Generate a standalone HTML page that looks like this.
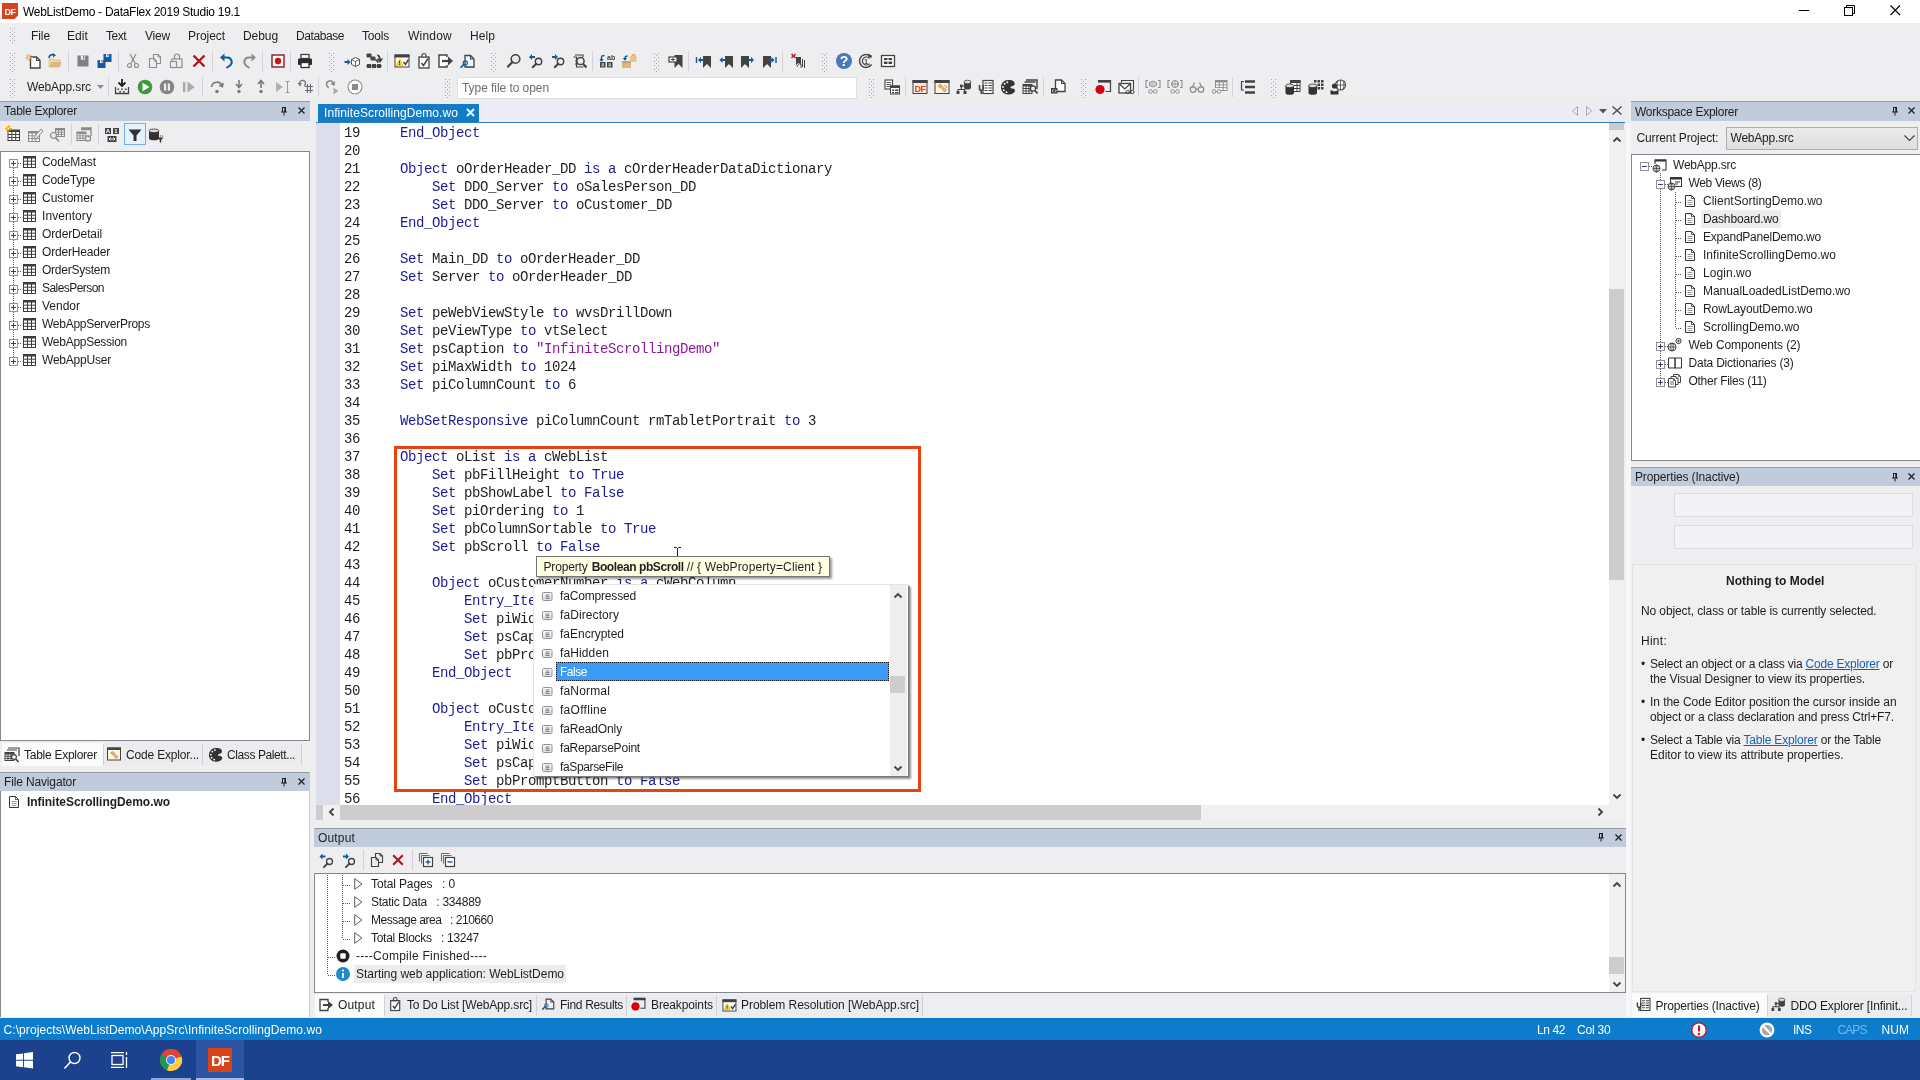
<!DOCTYPE html><html><head><meta charset="utf-8"><title>WebListDemo - DataFlex 2019 Studio 19.1</title><style>
html,body{margin:0;padding:0}
body{will-change:transform;width:1920px;height:1080px;position:relative;overflow:hidden;background:#eeeef1;font-family:'Liberation Sans',sans-serif;font-size:12px;color:#1e1e1e}
body div,body span.t,svg.i{position:absolute;box-sizing:border-box}
span.t{white-space:pre;display:block}
span.m{font-family:'Liberation Mono',monospace}
svg.i{overflow:visible}
a{color:#1a5fb4;text-decoration:underline}
.k{color:#1b1b92}.s{color:#8a1a9a}
</style></head><body><div style="left:0px;top:0px;width:1920px;height:23px;background:#ffffff;"></div><svg class="i" style="left:2px;top:3px;" width="16" height="16" viewBox="0 0 16 16"><path d="M0 0h16v12.5l-3.5 3.5h-12.5z" fill="#d9431a"/><text x="8" y="11.5" text-anchor="middle" font-family="Liberation Sans" font-weight="bold" font-size="9" fill="#fff" letter-spacing="-.6">DF</text></svg><span class="t" style="top:3.5px;line-height:16px;font-size:12px;color:#000;left:23px;letter-spacing:-0.280px;">WebListDemo - DataFlex 2019 Studio 19.1</span><svg class="i" style="left:1799px;top:10px;" width="10" height="1" viewBox="0 0 10 1"><rect width="10" height="1" fill="#000"/></svg><svg class="i" style="left:1844px;top:5px;" width="10.5" height="10.5" viewBox="0 0 10.5 10.5"><path d="M2.5 2.5v-2h8v8h-2" fill="none" stroke="#000"/><rect x=".5" y="2.5" width="8" height="8" fill="none" stroke="#000"/></svg><svg class="i" style="left:1890px;top:4.5px;" width="11" height="11" viewBox="0 0 11 11"><path d="M.5 .5l9.500 9.500M10 .5l-9.500 9.500" stroke="#000" stroke-width="1.1"/></svg><svg class="i" style="left:10px;top:28px;" width="5" height="16" viewBox="0 0 5 16"><g fill="#a5a5ab"><rect x="0" y="0" width="1" height="1"/><rect x="2" y="2" width="1" height="1"/><rect x="4" y="0" width="1" height="1"/><rect x="0" y="4" width="1" height="1"/><rect x="2" y="6" width="1" height="1"/><rect x="4" y="4" width="1" height="1"/><rect x="0" y="8" width="1" height="1"/><rect x="2" y="10" width="1" height="1"/><rect x="4" y="8" width="1" height="1"/><rect x="0" y="12" width="1" height="1"/><rect x="2" y="14" width="1" height="1"/><rect x="4" y="12" width="1" height="1"/></g></svg><span class="t" style="top:27.5px;line-height:16px;font-size:12px;color:#1e1e1e;left:31px;letter-spacing:-0.086px;">File</span><span class="t" style="top:27.5px;line-height:16px;font-size:12px;color:#1e1e1e;left:67px;letter-spacing:0.078px;">Edit</span><span class="t" style="top:27.5px;line-height:16px;font-size:12px;color:#1e1e1e;left:106px;letter-spacing:-0.504px;">Text</span><span class="t" style="top:27.5px;line-height:16px;font-size:12px;color:#1e1e1e;left:145px;letter-spacing:-0.199px;">View</span><span class="t" style="top:27.5px;line-height:16px;font-size:12px;color:#1e1e1e;left:188px;letter-spacing:-0.051px;">Project</span><span class="t" style="top:27.5px;line-height:16px;font-size:12px;color:#1e1e1e;left:243px;letter-spacing:-0.075px;">Debug</span><span class="t" style="top:27.5px;line-height:16px;font-size:12px;color:#1e1e1e;left:296px;letter-spacing:-0.422px;">Database</span><span class="t" style="top:27.5px;line-height:16px;font-size:12px;color:#1e1e1e;left:362px;letter-spacing:-0.203px;">Tools</span><span class="t" style="top:27.5px;line-height:16px;font-size:12px;color:#1e1e1e;left:408px;letter-spacing:0.219px;">Window</span><span class="t" style="top:27.5px;line-height:16px;font-size:12px;color:#1e1e1e;left:470px;letter-spacing:0.078px;">Help</span><svg class="i" style="left:10px;top:53px;" width="5" height="18" viewBox="0 0 5 18"><g fill="#a5a5ab"><rect x="0" y="0" width="1" height="1"/><rect x="2" y="2" width="1" height="1"/><rect x="4" y="0" width="1" height="1"/><rect x="0" y="4" width="1" height="1"/><rect x="2" y="6" width="1" height="1"/><rect x="4" y="4" width="1" height="1"/><rect x="0" y="8" width="1" height="1"/><rect x="2" y="10" width="1" height="1"/><rect x="4" y="8" width="1" height="1"/><rect x="0" y="12" width="1" height="1"/><rect x="2" y="14" width="1" height="1"/><rect x="4" y="12" width="1" height="1"/><rect x="0" y="16" width="1" height="1"/><rect x="2" y="18" width="1" height="1"/><rect x="4" y="16" width="1" height="1"/></g></svg><svg class="i" style="left:25px;top:53px;" width="16" height="16" viewBox="0 0 16 16"><path d="M5.5 4h6.0l3.5 3.5v7.5h-9.5z" fill="#fff" stroke="#424242" stroke-width="1.4"/><path d="M11.5 4v3.5h3.5" fill="none" stroke="#424242" stroke-width="1.1199999999999999"/><g transform="translate(.5,1)"><path d="M3.5 0v7M0 3.5h7M1 1l5 5M6 1l-5 5" stroke="#e59a12" stroke-width=".9"/><circle cx="3.5" cy="3.5" r=".9" fill="#fff7d0"/></g></svg><svg class="i" style="left:47px;top:53px;" width="16" height="16" viewBox="0 0 16 16"><path d="M2 6h4l1 1h6v7h-11z" fill="#f0d9a8" stroke="#dcb67a" stroke-width=".8"/><path d="M2.5 14l2-5h10l-2 5z" fill="#dcb67a"/><path d="M2 5c0-3 3-4 5-3" fill="none" stroke="#0f5aa0" stroke-width="1.6"/><path d="M6 0l3 2.2l-3 2.2z" fill="#0f5aa0"/></svg><div style="left:68px;top:51px;width:1px;height:20px;background:#d2d2d8;"></div><svg class="i" style="left:75px;top:53px;" width="16" height="16" viewBox="0 0 16 16"><path d="M2.5 2.5h11v11h-11z" fill="#7f7f83"/><rect x="5.8" y="2.5" width="4.4" height="4.18" fill="#eeeef2"/><rect x="8.0" y="2.5" width="1.3199999999999998" height="3.3" fill="#7f7f83"/></svg><svg class="i" style="left:97px;top:53px;" width="16" height="16" viewBox="0 0 16 16"><path d="M0.5 7h8v8h-8z" fill="#0f5aa0"/><rect x="2.9" y="7" width="3.2" height="3.04" fill="#eeeef2"/><rect x="4.5" y="7" width="0.96" height="2.4" fill="#0f5aa0"/><path d="M6.5 1h8v8h-8z" fill="#0f5aa0"/><rect x="8.9" y="1" width="3.2" height="3.04" fill="#eeeef2"/><rect x="10.5" y="1" width="0.96" height="2.4" fill="#0f5aa0"/></svg><div style="left:118px;top:51px;width:1px;height:20px;background:#d2d2d8;"></div><svg class="i" style="left:125px;top:53px;" width="16" height="16" viewBox="0 0 16 16"><path d="M5 1l5.5 10M11 1l-5.5 10" stroke="#8e8e8e" stroke-width="1.3"/><circle cx="4.5" cy="12.5" r="2" fill="none" stroke="#8e8e8e" stroke-width="1.2"/><circle cx="11.5" cy="12.5" r="2" fill="none" stroke="#8e8e8e" stroke-width="1.2"/></svg><svg class="i" style="left:147px;top:53px;" width="16" height="16" viewBox="0 0 16 16"><path d="M6.5 1.5h4.5l2.5 2.5v6.5h-7z" fill="none" stroke="#8e8e8e" stroke-width="1.1"/><path d="M11.0 1.5v2.5h2.5" fill="none" stroke="#8e8e8e" stroke-width="0.8800000000000001"/><path d="M2.5 5.5h4.5l2.5 2.5v6.5h-7z" fill="#eeeef2" stroke="#8e8e8e" stroke-width="1.1"/><path d="M7.0 5.5v2.5h2.5" fill="none" stroke="#8e8e8e" stroke-width="0.8800000000000001"/></svg><svg class="i" style="left:169px;top:53px;" width="16" height="16" viewBox="0 0 16 16"><rect x="3" y="6" width="10" height="8.5" fill="none" stroke="#8e8e8e" stroke-width="1.2"/><path d="M5.5 6v-2.5a2.5 2.5 0 0 1 5 0v2.5" fill="none" stroke="#8e8e8e" stroke-width="1.2"/><rect x="1.5" y="8.5" width="6" height="6" fill="#eeeef2" stroke="#8e8e8e" stroke-width="1.1"/></svg><svg class="i" style="left:191px;top:53px;" width="16" height="16" viewBox="0 0 16 16"><path d="M2.5 2.5l11 11M13.5 2.5l-11 11" stroke="#b3141c" stroke-width="2.4"/></svg><div style="left:212px;top:51px;width:1px;height:20px;background:#d2d2d8;"></div><svg class="i" style="left:219px;top:53px;" width="16" height="16" viewBox="0 0 16 16"><path d="M3.5 4.5h5a4.5 4.5 0 0 1 2.5 8l-3.5 2.5" fill="none" stroke="#0f5aa0" stroke-width="2"/><path d="M1 4.5l4.5-4v8z" fill="#0f5aa0"/></svg><svg class="i" style="left:241px;top:53px;" width="16" height="16" viewBox="0 0 16 16"><g transform="translate(16,0) scale(-1,1)"><path d="M3.5 4.5h5a4.5 4.5 0 0 1 2.5 8l-3.5 2.5" fill="none" stroke="#8e8e8e" stroke-width="2"/><path d="M1 4.5l4.5-4v8z" fill="#8e8e8e"/></g></svg><div style="left:262px;top:51px;width:1px;height:20px;background:#d2d2d8;"></div><svg class="i" style="left:270px;top:53px;" width="16" height="16" viewBox="0 0 16 16"><rect x="2" y="2" width="12" height="12" fill="#fff" stroke="#8c1a1a" stroke-width="1.4"/><circle cx="8" cy="8" r="3.2" fill="#c4161c"/></svg><div style="left:290px;top:51px;width:1px;height:20px;background:#d2d2d8;"></div><svg class="i" style="left:297px;top:53px;" width="16" height="16" viewBox="0 0 16 16"><rect x="4" y="1.5" width="8" height="4" fill="#fff" stroke="#424242" stroke-width="1.3"/><rect x="1" y="5.5" width="14" height="6.5" rx="1" fill="#2d2d2d"/><rect x="4" y="9.5" width="8" height="5" fill="#fff" stroke="#2d2d2d" stroke-width="1.3"/></svg><svg class="i" style="left:329px;top:53px;" width="5" height="18" viewBox="0 0 5 18"><g fill="#a5a5ab"><rect x="0" y="0" width="1" height="1"/><rect x="2" y="2" width="1" height="1"/><rect x="4" y="0" width="1" height="1"/><rect x="0" y="4" width="1" height="1"/><rect x="2" y="6" width="1" height="1"/><rect x="4" y="4" width="1" height="1"/><rect x="0" y="8" width="1" height="1"/><rect x="2" y="10" width="1" height="1"/><rect x="4" y="8" width="1" height="1"/><rect x="0" y="12" width="1" height="1"/><rect x="2" y="14" width="1" height="1"/><rect x="4" y="12" width="1" height="1"/><rect x="0" y="16" width="1" height="1"/><rect x="2" y="18" width="1" height="1"/><rect x="4" y="16" width="1" height="1"/></g></svg><svg class="i" style="left:344px;top:53px;" width="16" height="16" viewBox="0 0 16 16"><path d="M6.5 9l-3 -3v2h-3v2h3v2z" fill="#0f5aa0"/><path d="M11.500 4.500l4 2v4.800l-4 2.300l-4-2.300v-4.800z" fill="#fff" stroke="#424242" stroke-width=".9"/><path d="M7.500 6.500l4 2l4-2M11.500 8.500v5" fill="none" stroke="#424242" stroke-width=".8"/></svg><svg class="i" style="left:366px;top:53px;" width="16" height="16" viewBox="0 0 16 16"><path d="M1 1h4v3h-4zM5 4h4v3h-4zM9 7h3v3" fill="#424242" stroke="#424242" stroke-width="1"/><path d="M11 2c3 0 3 2 3 5M12 6l2 3l2-3z" fill="#424242" stroke="#424242" stroke-width="1.2"/><path d="M1 11h4v4h-4zM6 11h4v4h-4zM11 11h4v4h-4z" fill="#424242"/><path d="M0 13h16" stroke="#424242"/></svg><div style="left:387px;top:51px;width:1px;height:20px;background:#d2d2d8;"></div><svg class="i" style="left:394px;top:53px;" width="16" height="16" viewBox="0 0 16 16"><rect x="1.0" y="2.0" width="14" height="12" fill="#fff" stroke="#424242"/><rect x="0.5" y="1.5" width="15" height="3" fill="#424242"/><path d="M5.5 6l3.5 6.5h-7z" fill="#ffd91a" stroke="#c9a800" stroke-width=".5"/><path d="M5.5 8v2.5M5.5 11.2v.8" stroke="#333" stroke-width="1"/><path d="M9.5 9l2 2.5l3-5" fill="none" stroke="#424242" stroke-width="1.5"/></svg><svg class="i" style="left:416px;top:53px;" width="16" height="16" viewBox="0 0 16 16"><rect x="3" y="4" width="10" height="11" fill="#fff" stroke="#424242" stroke-width="1.3"/><path d="M6 4v-1.5a2 2 0 0 1 4 0v1.5z" fill="#fff" stroke="#424242" stroke-width="1.2"/><path d="M5.5 10l2 2.5l4.5-7" fill="none" stroke="#424242" stroke-width="1.5"/></svg><svg class="i" style="left:438px;top:53px;" width="16" height="16" viewBox="0 0 16 16"><path d="M9 4v-2h-8v12h8v-2" fill="#fff" stroke="#424242" stroke-width="1.4"/><path d="M4 8h8" stroke="#424242" stroke-width="2.2"/><path d="M10 3.5l5 4.5l-5 4.5z" fill="#424242"/></svg><svg class="i" style="left:459px;top:53px;" width="16" height="16" viewBox="0 0 16 16"><path d="M6 2.5h5.5l3.5 3.5v8.0h-9z" fill="#eef3fa" stroke="#424242" stroke-width="1.3"/><path d="M11.5 2.5v3.5h3.5" fill="none" stroke="#424242" stroke-width="1.04"/><circle cx="6.3" cy="10" r="2.1" fill="none" stroke="#0f5aa0" stroke-width="1.1"/><path d="M4.83 11.47l-2.8 2.8" stroke="#0f5aa0" stroke-width="1.7000000000000002" stroke-linecap="round"/></svg><svg class="i" style="left:491px;top:53px;" width="5" height="18" viewBox="0 0 5 18"><g fill="#a5a5ab"><rect x="0" y="0" width="1" height="1"/><rect x="2" y="2" width="1" height="1"/><rect x="4" y="0" width="1" height="1"/><rect x="0" y="4" width="1" height="1"/><rect x="2" y="6" width="1" height="1"/><rect x="4" y="4" width="1" height="1"/><rect x="0" y="8" width="1" height="1"/><rect x="2" y="10" width="1" height="1"/><rect x="4" y="8" width="1" height="1"/><rect x="0" y="12" width="1" height="1"/><rect x="2" y="14" width="1" height="1"/><rect x="4" y="12" width="1" height="1"/><rect x="0" y="16" width="1" height="1"/><rect x="2" y="18" width="1" height="1"/><rect x="4" y="16" width="1" height="1"/></g></svg><svg class="i" style="left:506px;top:53px;" width="16" height="16" viewBox="0 0 16 16"><circle cx="9.5" cy="6" r="4.3" fill="none" stroke="#424242" stroke-width="1.6"/><path d="M6.49 9.01l-4.5 4.5" stroke="#424242" stroke-width="2.2" stroke-linecap="round"/></svg><svg class="i" style="left:528px;top:53px;" width="16" height="16" viewBox="0 0 16 16"><circle cx="10.5" cy="8.5" r="3.2" fill="none" stroke="#424242" stroke-width="1.4"/><path d="M8.26 10.74l-3.5 3.5" stroke="#424242" stroke-width="2.0" stroke-linecap="round"/><path d="M1 4l3 -3v2h3v2h-3v2z" fill="#0f5aa0"/></svg><svg class="i" style="left:550px;top:53px;" width="16" height="16" viewBox="0 0 16 16"><circle cx="10.5" cy="8.5" r="3.2" fill="none" stroke="#424242" stroke-width="1.4"/><path d="M8.26 10.74l-3.5 3.5" stroke="#424242" stroke-width="2.0" stroke-linecap="round"/><path d="M8 4l-3 -3v2h-3v2h3v2z" fill="#0f5aa0"/></svg><svg class="i" style="left:572px;top:53px;" width="16" height="16" viewBox="0 0 16 16"><path d="M3 2h8v2M1.5 4h3v10h7" fill="none" stroke="#424242" stroke-width="1.2"/><circle cx="8.5" cy="8" r="3.6" fill="#eeeef2" stroke="#424242" stroke-width="1.5"/><path d="M11 10.8l3.5 3.7" stroke="#424242" stroke-width="2.2"/><path d="M3 8h2M3 11h3" stroke="#424242"/></svg><div style="left:592px;top:51px;width:1px;height:20px;background:#d2d2d8;"></div><svg class="i" style="left:599px;top:53px;" width="16" height="16" viewBox="0 0 16 16"><rect x="1" y="9" width="5.5" height="5.5" fill="#424242"/><rect x="8" y="9" width="5.5" height="5.5" fill="#424242"/><path d="M2.5 11h2.5M9.5 11h2.5M2.5 12.8h2.5M9.5 12.8h2.5" stroke="#fff" stroke-width=".9"/><path d="M2.5 8v-3.5c0-1.5 1-2 3-2" fill="none" stroke="#0f5aa0" stroke-width="1.4"/><path d="M0.3 6l2.2 2.8l2.2-2.8z" fill="#0f5aa0"/><text x="8" y="6.5" font-family="Liberation Sans" font-weight="bold" font-size="7" fill="#424242">ab</text></svg><svg class="i" style="left:621px;top:53px;" width="16" height="16" viewBox="0 0 16 16"><rect x="1" y="8" width="9" height="7" fill="#dcb67a"/><rect x="1" y="8" width="9" height="2" fill="#c9a267"/><rect x="9" y="3" width="6.5" height="6" fill="#e6c48d"/><rect x="10.5" y="1" width="4" height="2" fill="#dcb67a"/><path d="M4 7v-2c0-1.5 1-2 2.5-2" fill="none" stroke="#0f5aa0" stroke-width="1.4"/><path d="M1.8 5l2.2 2.8l2.2-2.8z" fill="#0f5aa0"/></svg><svg class="i" style="left:654px;top:53px;" width="5" height="18" viewBox="0 0 5 18"><g fill="#a5a5ab"><rect x="0" y="0" width="1" height="1"/><rect x="2" y="2" width="1" height="1"/><rect x="4" y="0" width="1" height="1"/><rect x="0" y="4" width="1" height="1"/><rect x="2" y="6" width="1" height="1"/><rect x="4" y="4" width="1" height="1"/><rect x="0" y="8" width="1" height="1"/><rect x="2" y="10" width="1" height="1"/><rect x="4" y="8" width="1" height="1"/><rect x="0" y="12" width="1" height="1"/><rect x="2" y="14" width="1" height="1"/><rect x="4" y="12" width="1" height="1"/><rect x="0" y="16" width="1" height="1"/><rect x="2" y="18" width="1" height="1"/><rect x="4" y="16" width="1" height="1"/></g></svg><svg class="i" style="left:668px;top:53px;" width="16" height="16" viewBox="0 0 16 16"><path d="M6.5 2h8v13l-4.0 -4.0l-4.0 4.0z" fill="#424242"/><rect x="1" y="4" width="8" height="5" fill="#fff" stroke="#424242" stroke-width="1.2"/><path d="M3 6.5h4M5 5v3" stroke="#424242" stroke-width="1"/></svg><div style="left:688px;top:51px;width:1px;height:20px;background:#d2d2d8;"></div><svg class="i" style="left:695px;top:53px;" width="16" height="16" viewBox="0 0 16 16"><path d="M8 3h8v12l-4.0 -4.0l-4.0 4.0z" fill="#424242"/><path d="M3 7l3 -3v2h3v2h-3v2z" fill="#0f5aa0"/><path d="M1.500 4v6" stroke="#0f5aa0" stroke-width="1.4"/></svg><svg class="i" style="left:717px;top:53px;" width="16" height="16" viewBox="0 0 16 16"><path d="M8 3h8v12l-4.0 -4.0l-4.0 4.0z" fill="#424242"/><path d="M2.5 7l3 -3v2h3v2h-3v2z" fill="#0f5aa0"/></svg><svg class="i" style="left:739px;top:53px;" width="16" height="16" viewBox="0 0 16 16"><path d="M2 3h8v12l-4.0 -4.0l-4.0 4.0z" fill="#424242"/><path d="M15 7l-3 -3v2h-3v2h3v2z" fill="#0f5aa0"/></svg><svg class="i" style="left:761px;top:53px;" width="16" height="16" viewBox="0 0 16 16"><path d="M2 3h8v12l-4.0 -4.0l-4.0 4.0z" fill="#424242"/><path d="M13.5 7l-3 -3v2h-3v2h3v2z" fill="#0f5aa0"/><path d="M15 4v6" stroke="#0f5aa0" stroke-width="1.4"/></svg><div style="left:782px;top:51px;width:1px;height:20px;background:#d2d2d8;"></div><svg class="i" style="left:790px;top:53px;" width="16" height="16" viewBox="0 0 16 16"><path d="M1.5 1l4 4M5.5 1l-4 4" stroke="#b3141c" stroke-width="1.4"/><path d="M6 4h5v8l-2.5-2l-2.5 2z" fill="#424242"/><path d="M12.5 6v8M14.5 7v8" stroke="#424242" stroke-width="1"/><path d="M9 11l-2.5 3M11 11v4" stroke="#424242" stroke-width=".9"/></svg><svg class="i" style="left:822px;top:53px;" width="5" height="18" viewBox="0 0 5 18"><g fill="#a5a5ab"><rect x="0" y="0" width="1" height="1"/><rect x="2" y="2" width="1" height="1"/><rect x="4" y="0" width="1" height="1"/><rect x="0" y="4" width="1" height="1"/><rect x="2" y="6" width="1" height="1"/><rect x="4" y="4" width="1" height="1"/><rect x="0" y="8" width="1" height="1"/><rect x="2" y="10" width="1" height="1"/><rect x="4" y="8" width="1" height="1"/><rect x="0" y="12" width="1" height="1"/><rect x="2" y="14" width="1" height="1"/><rect x="4" y="12" width="1" height="1"/><rect x="0" y="16" width="1" height="1"/><rect x="2" y="18" width="1" height="1"/><rect x="4" y="16" width="1" height="1"/></g></svg><svg class="i" style="left:836px;top:53px;" width="16" height="16" viewBox="0 0 16 16"><circle cx="8" cy="8" r="8" fill="#4a78b8"/><text x="8" y="13" text-anchor="middle" font-family="Liberation Sans" font-weight="bold" font-size="14" fill="#fff">?</text></svg><svg class="i" style="left:858px;top:53px;" width="16" height="16" viewBox="0 0 16 16"><path d="M13.5 4.5a6.5 6.5 0 1 0 0 7" fill="none" stroke="#424242" stroke-width="1.4"/><path d="M11.5 5.5a4 4 0 1 0 0 5" fill="none" stroke="#424242" stroke-width="1.2"/><path d="M10 0.5l4.5 2.5l-4 2z" fill="#424242"/><text x="8" y="10.5" text-anchor="middle" font-family="Liberation Sans" font-weight="bold" font-size="6.5" fill="#424242">1</text></svg><svg class="i" style="left:880px;top:53px;" width="16" height="16" viewBox="0 0 16 16"><rect x="1.5" y="2.5" width="13" height="11" fill="#fff" stroke="#424242" stroke-width="1.3"/><path d="M4 5h3.5v2h-3.5zM8.5 5h3.5v2h-3.5zM4 8.5h3.5v2.5h-3.5zM8.5 8.5h3.5v2.5h-3.5z" fill="#424242"/></svg><svg class="i" style="left:10px;top:79px;" width="5" height="18" viewBox="0 0 5 18"><g fill="#a5a5ab"><rect x="0" y="0" width="1" height="1"/><rect x="2" y="2" width="1" height="1"/><rect x="4" y="0" width="1" height="1"/><rect x="0" y="4" width="1" height="1"/><rect x="2" y="6" width="1" height="1"/><rect x="4" y="4" width="1" height="1"/><rect x="0" y="8" width="1" height="1"/><rect x="2" y="10" width="1" height="1"/><rect x="4" y="8" width="1" height="1"/><rect x="0" y="12" width="1" height="1"/><rect x="2" y="14" width="1" height="1"/><rect x="4" y="12" width="1" height="1"/><rect x="0" y="16" width="1" height="1"/><rect x="2" y="18" width="1" height="1"/><rect x="4" y="16" width="1" height="1"/></g></svg><span class="t" style="top:78.5px;line-height:16px;font-size:12px;color:#1e1e1e;left:27px;letter-spacing:-0.114px;">WebApp.src</span><svg class="i" style="left:97px;top:85px;" width="7" height="4" viewBox="0 0 7 4"><path d="M0 0h7l-3.5 4z" fill="#8a8a8a"/></svg><div style="left:108px;top:77px;width:1px;height:20px;background:#d2d2d8;"></div><svg class="i" style="left:114px;top:79px;" width="16" height="16" viewBox="0 0 16 16"><path d="M1.5 8v6.5h13v-6.5" fill="none" stroke="#424242" stroke-width="1.3"/><path d="M8 0v6M4.5 3.5l3.5 3.5l3.5-3.5" fill="none" stroke="#1e1e1e" stroke-width="1.8"/><path d="M3.5 9.5h1.6v1.6h-1.6zM7.2 9.5h1.6v1.6h-1.6zM10.9 9.5h1.6v1.6h-1.6zM5.3 12h1.6v1.6h-1.6zM9 12h1.6v1.6h-1.6z" fill="#424242"/></svg><svg class="i" style="left:137px;top:79px;" width="16" height="16" viewBox="0 0 16 16"><circle cx="8" cy="8" r="7.3" fill="#3a9a3a"/><path d="M5.5 3.8l7 4.2l-7 4.2z" fill="#fff"/></svg><svg class="i" style="left:159px;top:79px;" width="16" height="16" viewBox="0 0 16 16"><circle cx="8" cy="8" r="7.3" fill="#858585"/><path d="M5 4.5h2.2v7h-2.2zM8.8 4.5h2.2v7h-2.2z" fill="#eeeef2"/></svg><svg class="i" style="left:181px;top:79px;" width="16" height="16" viewBox="0 0 16 16"><rect x="2" y="3" width="2.4" height="10" fill="#a9a9a9"/><path d="M6.5 2.5l7 5.5l-7 5.5z" fill="#a9a9a9"/></svg><div style="left:202px;top:77px;width:1px;height:20px;background:#d2d2d8;"></div><svg class="i" style="left:209px;top:79px;" width="16" height="16" viewBox="0 0 16 16"><path d="M2.5 8a5.5 5.5 0 0 1 10.5-1.5" fill="none" stroke="#7a7a7a" stroke-width="1.6"/><path d="M14.8 3.5l-.8 5.2l-4.6-2z" fill="#7a7a7a"/><circle cx="8" cy="12.5" r="1.7" fill="#7a7a7a"/></svg><svg class="i" style="left:231px;top:79px;" width="16" height="16" viewBox="0 0 16 16"><path d="M8 1v6M5 5l3 3.5l3-3.5" fill="none" stroke="#7a7a7a" stroke-width="1.6"/><circle cx="8" cy="12.5" r="1.7" fill="#7a7a7a"/></svg><svg class="i" style="left:253px;top:79px;" width="16" height="16" viewBox="0 0 16 16"><path d="M8 9v-6.5M5 5l3-3.5l3 3.5" fill="none" stroke="#7a7a7a" stroke-width="1.6"/><circle cx="8" cy="12.5" r="1.7" fill="#7a7a7a"/></svg><svg class="i" style="left:275px;top:79px;" width="16" height="16" viewBox="0 0 16 16"><path d="M1 3l7 5l-7 5z" fill="#b0b0b0"/><path d="M10.5 2.5h4M10.5 13.5h4M12.5 2.5v11" stroke="#9a9a9a" stroke-width="1"/></svg><svg class="i" style="left:297px;top:79px;" width="16" height="16" viewBox="0 0 16 16"><path d="M8 7.5h8M8 11.5h8M10.5 5v9M13.5 5v9" stroke="#6a6a6a" stroke-width="1.1"/><path d="M3 6a3 3 0 1 1 4 1" fill="none" stroke="#7a7a7a" stroke-width="1.4"/><path d="M0.5 4l2.5 3.5l2-3.5z" fill="#7a7a7a"/></svg><div style="left:318px;top:77px;width:1px;height:20px;background:#d2d2d8;"></div><svg class="i" style="left:324px;top:79px;" width="16" height="16" viewBox="0 0 16 16"><path d="M4.5 9l-2-3a3.5 3.5 0 0 1 6-3l1 1.5" fill="none" stroke="#8a8a8a" stroke-width="1.5"/><path d="M11 2l-.3 5l-4.2-2z" fill="#8a8a8a"/><path d="M9.5 8.5l5 3.5l-5 3.5z" fill="#a9a9a9"/></svg><svg class="i" style="left:347px;top:79px;" width="16" height="16" viewBox="0 0 16 16"><circle cx="8" cy="8" r="7" fill="#fff" stroke="#8a8a8a" stroke-width="1.1"/><rect x="5" y="5" width="6" height="6" fill="#8a8a8a"/></svg><svg class="i" style="left:445px;top:79px;" width="5" height="18" viewBox="0 0 5 18"><g fill="#a5a5ab"><rect x="0" y="0" width="1" height="1"/><rect x="2" y="2" width="1" height="1"/><rect x="4" y="0" width="1" height="1"/><rect x="0" y="4" width="1" height="1"/><rect x="2" y="6" width="1" height="1"/><rect x="4" y="4" width="1" height="1"/><rect x="0" y="8" width="1" height="1"/><rect x="2" y="10" width="1" height="1"/><rect x="4" y="8" width="1" height="1"/><rect x="0" y="12" width="1" height="1"/><rect x="2" y="14" width="1" height="1"/><rect x="4" y="12" width="1" height="1"/><rect x="0" y="16" width="1" height="1"/><rect x="2" y="18" width="1" height="1"/><rect x="4" y="16" width="1" height="1"/></g></svg><svg class="i" style="left:869px;top:79px;" width="5" height="18" viewBox="0 0 5 18"><g fill="#a5a5ab"><rect x="0" y="0" width="1" height="1"/><rect x="2" y="2" width="1" height="1"/><rect x="4" y="0" width="1" height="1"/><rect x="0" y="4" width="1" height="1"/><rect x="2" y="6" width="1" height="1"/><rect x="4" y="4" width="1" height="1"/><rect x="0" y="8" width="1" height="1"/><rect x="2" y="10" width="1" height="1"/><rect x="4" y="8" width="1" height="1"/><rect x="0" y="12" width="1" height="1"/><rect x="2" y="14" width="1" height="1"/><rect x="4" y="12" width="1" height="1"/><rect x="0" y="16" width="1" height="1"/><rect x="2" y="18" width="1" height="1"/><rect x="4" y="16" width="1" height="1"/></g></svg><svg class="i" style="left:884px;top:79px;" width="16" height="16" viewBox="0 0 16 16"><rect x="1" y="1" width="7.5" height="9" fill="#fff" stroke="#424242" stroke-width="1.1"/><path d="M2.5 3.5h4.5M2.5 5.5h4.5M2.5 7.5h4.5" stroke="#424242" stroke-width=".9"/><rect x="6.5" y="7.0" width="9" height="8" fill="#fff" stroke="#424242"/><rect x="6" y="6.5" width="10" height="2.5" fill="#424242"/><path d="M8 10.5h2v1.5h-2zM11 10.5h3.5v1.5h-3.5zM8 13h2v1.2h-2zM11 13h3.5v1.2h-3.5z" fill="#424242"/></svg><div style="left:905px;top:77px;width:1px;height:20px;background:#d2d2d8;"></div><svg class="i" style="left:912px;top:79px;" width="16" height="16" viewBox="0 0 16 16"><rect x="1.0" y="1.5" width="14" height="13" fill="#fde8dc" stroke="#424242"/><rect x="0.5" y="1" width="15" height="3" fill="#424242"/><text x="8" y="12.5" text-anchor="middle" font-family="Liberation Sans" font-weight="bold" font-size="9" fill="#d9461a" letter-spacing="-.5">DF</text></svg><svg class="i" style="left:934px;top:79px;" width="16" height="16" viewBox="0 0 16 16"><rect x="1.0" y="1.5" width="14" height="13" fill="#fdf3e0" stroke="#424242"/><rect x="0.5" y="1" width="15" height="3" fill="#424242"/><path d="M4 7l2-2l3 2.5l-2 2zM8 10l2-1.5l2.5 2.5l-2 2z" fill="#dcb67a" stroke="#b98a3c" stroke-width=".6"/><path d="M10.5 6.5c1.5 0 2 1 2 2.5" fill="none" stroke="#b98a3c" stroke-width="1"/></svg><svg class="i" style="left:956px;top:79px;" width="16" height="16" viewBox="0 0 16 16"><path d="M8 2.7v6a3.5 1.8 0 0 0 7 0v-6z" fill="#424242"/><ellipse cx="11.5" cy="3.0" rx="3.5" ry="1.8" fill="#dcdcdc" stroke="#424242" stroke-width="0.8"/><path d="M5.300 7h3M5.300 7v3.500M2 13v-2.500h6.700v2.500" fill="none" stroke="#424242" stroke-width="1.100"/><rect x="4" y="5.600" width="2.600" height="2.600" fill="#424242"/><rect x=".5" y="12" width="3" height="3" fill="#424242"/><rect x="7.5" y="12" width="3" height="3" fill="#424242"/></svg><svg class="i" style="left:978px;top:79px;" width="16" height="16" viewBox="0 0 16 16"><rect x="5" y="1.5" width="10" height="13" fill="#fff" stroke="#424242" stroke-width="1.2"/><path d="M6.5 4h3M10.5 4h3.5M6.5 6.5h3M10.5 6.5h3.5M6.5 9h3M10.5 9h3.5M6.5 11.5h3M10.5 11.5h3.5" stroke="#424242" stroke-width="1.1"/><path d="M1.5 6v3.5a1.8 1.8 0 0 0 3.6 0v-3.5M3.3 11v4" fill="none" stroke="#424242" stroke-width="1.6"/></svg><svg class="i" style="left:1000px;top:79px;" width="16" height="16" viewBox="0 0 16 16"><path d="M8 1C12 .5 15.500 2.500 14.600 5.500C14 7.200 11 7 10.300 8.400C11 9.700 15 9 15 11.500C15 14 11.500 15.500 8 15.500C4 15.500 1 12.500 1 8.500C1 4.500 4 1 8 1Z" fill="#333"/><circle cx="4.600" cy="4.800" r=".95" fill="#fff"/><circle cx="7.300" cy="3.200" r=".95" fill="#fff"/><circle cx="3" cy="8" r=".95" fill="#fff"/><circle cx="3.800" cy="11.200" r=".95" fill="#fff"/><circle cx="6.500" cy="13.200" r=".95" fill="#fff"/></svg><svg class="i" style="left:1022px;top:79px;" width="16" height="16" viewBox="0 0 16 16"><path d="M4 1h11v9M2.5 3h11" fill="none" stroke="#424242" stroke-width="1.4"/><rect x="0.5" y="5" width="10" height="10" fill="#424242"/><rect x="1.50" y="7.50" width="2.00" height="1.50" fill="#fff"/><rect x="1.50" y="10.00" width="2.00" height="1.50" fill="#fff"/><rect x="1.50" y="12.50" width="2.00" height="1.50" fill="#fff"/><rect x="4.50" y="7.50" width="2.00" height="1.50" fill="#fff"/><rect x="4.50" y="10.00" width="2.00" height="1.50" fill="#fff"/><rect x="4.50" y="12.50" width="2.00" height="1.50" fill="#fff"/><rect x="7.50" y="7.50" width="2.00" height="1.50" fill="#fff"/><rect x="7.50" y="10.00" width="2.00" height="1.50" fill="#fff"/><rect x="7.50" y="12.50" width="2.00" height="1.50" fill="#fff"/><circle cx="11" cy="9.5" r="2.6" fill="#eeeef2" stroke="#424242" stroke-width="1.3"/><path d="M13 11.5l2.5 3" stroke="#424242" stroke-width="1.8"/></svg><div style="left:1043px;top:77px;width:1px;height:20px;background:#d2d2d8;"></div><svg class="i" style="left:1050px;top:79px;" width="16" height="16" viewBox="0 0 16 16"><path d="M5.5 1h6.0l3.5 3.5v8.0h-9.5z" fill="#fff" stroke="#424242" stroke-width="1.3"/><path d="M11.5 1v3.5h3.5" fill="none" stroke="#424242" stroke-width="1.04"/><rect x="1" y="9" width="6.5" height="5.5" fill="#424242"/><path d="M3.5 10.5l-1.3 1.3l1.3 1.3M5 10.5l1.3 1.3l-1.3 1.3" fill="none" stroke="#fff" stroke-width=".9"/></svg><svg class="i" style="left:1081px;top:79px;" width="5" height="18" viewBox="0 0 5 18"><g fill="#a5a5ab"><rect x="0" y="0" width="1" height="1"/><rect x="2" y="2" width="1" height="1"/><rect x="4" y="0" width="1" height="1"/><rect x="0" y="4" width="1" height="1"/><rect x="2" y="6" width="1" height="1"/><rect x="4" y="4" width="1" height="1"/><rect x="0" y="8" width="1" height="1"/><rect x="2" y="10" width="1" height="1"/><rect x="4" y="8" width="1" height="1"/><rect x="0" y="12" width="1" height="1"/><rect x="2" y="14" width="1" height="1"/><rect x="4" y="12" width="1" height="1"/><rect x="0" y="16" width="1" height="1"/><rect x="2" y="18" width="1" height="1"/><rect x="4" y="16" width="1" height="1"/></g></svg><svg class="i" style="left:1095px;top:79px;" width="16" height="16" viewBox="0 0 16 16"><path d="M3.5 3v-1.5h12v11h-5" fill="none" stroke="#424242" stroke-width="1.2"/><rect x="3" y="1" width="13" height="2.6" fill="#424242"/><circle cx="5" cy="10.5" r="4.6" fill="#d4000f"/></svg><svg class="i" style="left:1118px;top:79px;" width="16" height="16" viewBox="0 0 16 16"><path d="M3.5 3.5v-2h12v9.5" fill="none" stroke="#424242" stroke-width="1.1"/><rect x="1" y="4.5" width="11.5" height="9.5" fill="#fff" stroke="#424242" stroke-width="1.3"/><path d="M1.5 5l5.3 5l5.2-5" fill="none" stroke="#424242" stroke-width="1.2"/><circle cx="9.66" cy="13" r="1.71" fill="none" stroke="#424242" stroke-width="1"/><circle cx="14.34" cy="13" r="1.71" fill="none" stroke="#424242" stroke-width="1"/><path d="M11.37 13h1.26" stroke="#424242"/></svg><div style="left:1138px;top:77px;width:1px;height:20px;background:#d2d2d8;"></div><svg class="i" style="left:1145px;top:79px;" width="16" height="16" viewBox="0 0 16 16"><path d="M3 1.5h-2v7h2M13 1.5h2v7h-2" fill="none" stroke="#8e8e8e" stroke-width="1.1"/><path d="M8 2l3.5 1.5v3l-3.5 1.5l-3.5-1.5v-3z" fill="#c9c9c9" stroke="#8e8e8e" stroke-width=".9"/><circle cx="5.53" cy="12.5" r="1.805" fill="none" stroke="#8e8e8e" stroke-width="1"/><circle cx="10.469999999999999" cy="12.5" r="1.805" fill="none" stroke="#8e8e8e" stroke-width="1"/><path d="M7.335 12.5h1.3299999999999998" stroke="#8e8e8e"/></svg><svg class="i" style="left:1167px;top:79px;" width="16" height="16" viewBox="0 0 16 16"><path d="M3 1.5h-2v7h2M13 1.5h2v7h-2" fill="none" stroke="#8e8e8e" stroke-width="1.1"/><circle cx="8" cy="5" r="3.5" fill="none" stroke="#8e8e8e"/><path d="M4.5 5h7M8 1.5v7M6 2.5c-1 1.5-1 3.5 0 5M10 2.5c1 1.5 1 3.5 0 5" fill="none" stroke="#8e8e8e" stroke-width=".8"/><circle cx="5.53" cy="12.5" r="1.805" fill="none" stroke="#8e8e8e" stroke-width="1"/><circle cx="10.469999999999999" cy="12.5" r="1.805" fill="none" stroke="#8e8e8e" stroke-width="1"/><path d="M7.335 12.5h1.3299999999999998" stroke="#8e8e8e"/></svg><svg class="i" style="left:1189px;top:79px;" width="16" height="16" viewBox="0 0 16 16"><path d="M3 9l2.5-5.5M13 9l-2.5-5.5" stroke="#8e8e8e" stroke-width="1.2" fill="none"/><circle cx="4" cy="10.5" r="2.8" fill="none" stroke="#8e8e8e" stroke-width="1.3"/><circle cx="12" cy="10.5" r="2.8" fill="none" stroke="#8e8e8e" stroke-width="1.3"/><path d="M6.8 10h2.4" stroke="#8e8e8e" stroke-width="1.2"/></svg><svg class="i" style="left:1212px;top:79px;" width="16" height="16" viewBox="0 0 16 16"><rect x="3" y="1" width="12.5" height="11" fill="#8e8e8e"/><rect x="4.00" y="3.50" width="2.83" height="1.83" fill="#fff"/><rect x="4.00" y="6.33" width="2.83" height="1.83" fill="#fff"/><rect x="4.00" y="9.17" width="2.83" height="1.83" fill="#fff"/><rect x="7.83" y="3.50" width="2.83" height="1.83" fill="#fff"/><rect x="7.83" y="6.33" width="2.83" height="1.83" fill="#fff"/><rect x="7.83" y="9.17" width="2.83" height="1.83" fill="#fff"/><rect x="11.67" y="3.50" width="2.83" height="1.83" fill="#fff"/><rect x="11.67" y="6.33" width="2.83" height="1.83" fill="#fff"/><rect x="11.67" y="9.17" width="2.83" height="1.83" fill="#fff"/><rect x="0" y="9" width="9" height="7" fill="#eeeef2"/><circle cx="2.0300000000000002" cy="12.5" r="1.805" fill="none" stroke="#8e8e8e" stroke-width="1"/><circle cx="6.97" cy="12.5" r="1.805" fill="none" stroke="#8e8e8e" stroke-width="1"/><path d="M3.835 12.5h1.3299999999999998" stroke="#8e8e8e"/></svg><div style="left:1232px;top:77px;width:1px;height:20px;background:#d2d2d8;"></div><svg class="i" style="left:1240px;top:79px;" width="16" height="16" viewBox="0 0 16 16"><path d="M5 2.5h10M5 8h10M5 13.5h10" stroke="#424242" stroke-width="2.4"/><path d="M4 2.5h-2.5v8.5h2.5" fill="none" stroke="#424242" stroke-width="1.2"/></svg><svg class="i" style="left:1271px;top:79px;" width="5" height="18" viewBox="0 0 5 18"><g fill="#a5a5ab"><rect x="0" y="0" width="1" height="1"/><rect x="2" y="2" width="1" height="1"/><rect x="4" y="0" width="1" height="1"/><rect x="0" y="4" width="1" height="1"/><rect x="2" y="6" width="1" height="1"/><rect x="4" y="4" width="1" height="1"/><rect x="0" y="8" width="1" height="1"/><rect x="2" y="10" width="1" height="1"/><rect x="4" y="8" width="1" height="1"/><rect x="0" y="12" width="1" height="1"/><rect x="2" y="14" width="1" height="1"/><rect x="4" y="12" width="1" height="1"/><rect x="0" y="16" width="1" height="1"/><rect x="2" y="18" width="1" height="1"/><rect x="4" y="16" width="1" height="1"/></g></svg><svg class="i" style="left:1285px;top:79px;" width="16" height="16" viewBox="0 0 16 16"><rect x="5.5" y="1.5" width="9.5" height="11" fill="#fff" stroke="#424242"/><rect x="5" y="1" width="10.5" height="3" fill="#424242"/><path d="M9 6.5h6M9 9.5h6M12 4v9" stroke="#424242" stroke-width="1"/><path d="M0.5 6.5v7.5a4.25 1.8 0 0 0 8.5 0v-7.5z" fill="#333"/><ellipse cx="4.75" cy="6.8" rx="4.25" ry="1.8" fill="#ddd" stroke="#333" stroke-width="0.8"/></svg><svg class="i" style="left:1308px;top:79px;" width="16" height="16" viewBox="0 0 16 16"><path d="M6 1h2.5v2.5h-2.5zM9.5 1h2.5v2.5h-2.5zM13 1h2.5v2.5h-2.5zM9.5 4.5h2.5v2.5h-2.5zM13 4.5h2.5v2.5h-2.5zM9.5 8h2.5v2.5h-2.5zM13 8h2.5v2.5h-2.5z" fill="#424242"/><path d="M0.5 6.5v7.5a4.25 1.8 0 0 0 8.5 0v-7.5z" fill="#333"/><ellipse cx="4.75" cy="6.8" rx="4.25" ry="1.8" fill="#ddd" stroke="#333" stroke-width="0.8"/></svg><svg class="i" style="left:1330px;top:79px;" width="16" height="16" viewBox="0 0 16 16"><circle cx="10.5" cy="6" r="5" fill="#fff" stroke="#424242" stroke-width="1.1"/><path d="M5.5 6h10M10.5 1v10M8 2c-1.3 2.5-1.3 5.5 0 8M13 2c1.3 2.5 1.3 5.5 0 8" fill="none" stroke="#424242" stroke-width=".8"/><circle cx="4.5" cy="7" r="2.6" fill="#333"/><path d="M0.5 15.5v-4.5l4 1.5l4-1.5v4.5z" fill="#333"/></svg><div style="left:457px;top:77px;width:400px;height:22px;background:#ffffff;border:1px solid #e0e1e6;"></div><span class="t" style="top:79.5px;line-height:16px;font-size:12px;color:#6e6e6e;left:462px;letter-spacing:-0.062px;">Type file to open</span><div style="left:0px;top:101px;width:1px;height:20px;background:#9a9aa0;"></div><div style="left:0px;top:101px;width:310px;height:19.5px;background:#c0cbdc;border-top:1px solid #9c9ca4;"></div><span class="t" style="top:103.25px;line-height:16px;font-size:12px;color:#1e1e1e;left:4px;letter-spacing:-0.266px;">Table Explorer</span><svg class="i" style="left:281px;top:106.75px;" width="6" height="9" viewBox="0 0 6 9"><path d="M1 .5h4M1.500 .5v4.500M4.500 .5v4.500M3.800 .5v4.500M0 5h6M3 5v3.500" stroke="#1e1e1e" stroke-width="1" fill="none"/></svg><svg class="i" style="left:297.5px;top:107.25px;" width="7" height="7" viewBox="0 0 7 7"><path d="M.5 .5l6 6M6.5 .5l-6 6" stroke="#1e1e1e" stroke-width="1.2"/></svg><svg class="i" style="left:5px;top:127px;" width="16" height="16" viewBox="0 0 16 16"><rect x="2.5" y="2.5" width="12.5" height="11.5" fill="#424242"/><rect x="3.50" y="5.00" width="2.83" height="2.00" fill="#fff"/><rect x="3.50" y="8.00" width="2.83" height="2.00" fill="#fff"/><rect x="3.50" y="11.00" width="2.83" height="2.00" fill="#fff"/><rect x="7.33" y="5.00" width="2.83" height="2.00" fill="#fff"/><rect x="7.33" y="8.00" width="2.83" height="2.00" fill="#fff"/><rect x="7.33" y="11.00" width="2.83" height="2.00" fill="#fff"/><rect x="11.17" y="5.00" width="2.83" height="2.00" fill="#fff"/><rect x="11.17" y="8.00" width="2.83" height="2.00" fill="#fff"/><rect x="11.17" y="11.00" width="2.83" height="2.00" fill="#fff"/><g transform="translate(0,-2)"><path d="M3.5 0v7M0 3.5h7M1 1l5 5M6 1l-5 5" stroke="#e59a12" stroke-width=".9"/><circle cx="3.5" cy="3.5" r=".9" fill="#fff7d0"/></g></svg><svg class="i" style="left:27px;top:127px;" width="16" height="16" viewBox="0 0 16 16"><rect x="1" y="4" width="12" height="11" fill="#8a8a8a"/><rect x="2.00" y="6.50" width="2.67" height="1.83" fill="#fff"/><rect x="2.00" y="9.33" width="2.67" height="1.83" fill="#fff"/><rect x="2.00" y="12.17" width="2.67" height="1.83" fill="#fff"/><rect x="5.67" y="6.50" width="2.67" height="1.83" fill="#fff"/><rect x="5.67" y="9.33" width="2.67" height="1.83" fill="#fff"/><rect x="5.67" y="12.17" width="2.67" height="1.83" fill="#fff"/><rect x="9.33" y="6.50" width="2.67" height="1.83" fill="#fff"/><rect x="9.33" y="9.33" width="2.67" height="1.83" fill="#fff"/><rect x="9.33" y="12.17" width="2.67" height="1.83" fill="#fff"/><path d="M8 9l6-7l2 2l-6 7l-3 1z" fill="#eeeef2" stroke="#8a8a8a" stroke-width="1"/></svg><svg class="i" style="left:49px;top:127px;" width="16" height="16" viewBox="0 0 16 16"><rect x="6" y="1" width="10" height="9" fill="#8a8a8a"/><rect x="7.00" y="3.50" width="2.00" height="1.17" fill="#fff"/><rect x="7.00" y="5.67" width="2.00" height="1.17" fill="#fff"/><rect x="7.00" y="7.83" width="2.00" height="1.17" fill="#fff"/><rect x="10.00" y="3.50" width="2.00" height="1.17" fill="#fff"/><rect x="10.00" y="5.67" width="2.00" height="1.17" fill="#fff"/><rect x="10.00" y="7.83" width="2.00" height="1.17" fill="#fff"/><rect x="13.00" y="3.50" width="2.00" height="1.17" fill="#fff"/><rect x="13.00" y="5.67" width="2.00" height="1.17" fill="#fff"/><rect x="13.00" y="7.83" width="2.00" height="1.17" fill="#fff"/><circle cx="4.5" cy="8.5" r="3" fill="#eeeef2" stroke="#8a8a8a" stroke-width="1.2"/><path d="M6.7 10.8l3.3 3.7" stroke="#8a8a8a" stroke-width="1.6"/></svg><div style="left:71px;top:124px;width:1px;height:21px;background:#d2d2d8;"></div><svg class="i" style="left:76px;top:127px;" width="16" height="16" viewBox="0 0 16 16"><path d="M5 1h10v8M5 2.5h10" fill="none" stroke="#8a8a8a" stroke-width="1.3"/><rect x="0.5" y="4.5" width="10" height="9.5" fill="#8a8a8a"/><rect x="1.50" y="7.00" width="2.00" height="1.33" fill="#fff"/><rect x="1.50" y="9.33" width="2.00" height="1.33" fill="#fff"/><rect x="1.50" y="11.67" width="2.00" height="1.33" fill="#fff"/><rect x="4.50" y="7.00" width="2.00" height="1.33" fill="#fff"/><rect x="4.50" y="9.33" width="2.00" height="1.33" fill="#fff"/><rect x="4.50" y="11.67" width="2.00" height="1.33" fill="#fff"/><rect x="7.50" y="7.00" width="2.00" height="1.33" fill="#fff"/><rect x="7.50" y="9.33" width="2.00" height="1.33" fill="#fff"/><rect x="7.50" y="11.67" width="2.00" height="1.33" fill="#fff"/><circle cx="12" cy="11.5" r="2.6" fill="#eeeef2" stroke="#8a8a8a" stroke-width="1.2"/><path d="M12 8l2 1.5l-2 1z" fill="#8a8a8a"/></svg><div style="left:98px;top:124px;width:1px;height:21px;background:#d2d2d8;"></div><svg class="i" style="left:104px;top:127px;" width="16" height="16" viewBox="0 0 16 16"><rect x="1" y="1" width="6" height="6" fill="#424242"/><rect x="9" y="1" width="6" height="6" fill="#424242"/><rect x="3.5" y="9" width="9" height="6" fill="#424242"/><text x="4" y="6.3" text-anchor="middle" font-family="Liberation Sans" font-weight="bold" font-size="6" fill="#fff">A</text><text x="12" y="6.3" text-anchor="middle" font-family="Liberation Sans" font-weight="bold" font-size="6" fill="#fff">1</text><path d="M5 12h6M5 12l1.5-1.5M5 12l1.5 1.5M11 12l-1.5-1.5M11 12l-1.5 1.5" stroke="#fff" stroke-width="1" fill="none"/></svg><div style="left:124px;top:123px;width:22px;height:22px;background:#e5f1fb;border:1px solid #6fb1e8;"></div><svg class="i" style="left:127px;top:127px;" width="16" height="16" viewBox="0 0 16 16"><path d="M1.5 2.5h13l-5 6v5.5h-3v-5.5z" fill="#333"/></svg><svg class="i" style="left:148px;top:127px;" width="16" height="16" viewBox="0 0 16 16"><path d="M1 3.5v8a5.0 1.8 0 0 0 10 0v-8z" fill="#333"/><ellipse cx="6.0" cy="3.8" rx="5.0" ry="1.8" fill="#ddd" stroke="#333" stroke-width="0.8"/><path d="M9.5 10.5h6l-2.3 2.5v2.5h-1.4v-2.5z" fill="#333"/><path d="M10 9h5" stroke="#333" stroke-dasharray="1 1"/></svg><div style="left:0px;top:151px;width:310px;height:590px;background:#ffffff;border:1px solid #828790;"></div><div style="left:13px;top:164px;width:1px;height:197px;background:repeating-linear-gradient(#585858 0 1px,transparent 1px 2px);"></div><div style="left:18px;top:163px;width:4px;height:1px;background:repeating-linear-gradient(90deg,#585858 0 1px,transparent 1px 2px);"></div><svg class="i" style="left:9.0px;top:159.0px;" width="9" height="9" viewBox="0 0 9 9"><rect x=".5" y=".5" width="8" height="8" fill="#fff" stroke="#919191"/><path d="M2 4.5h5" stroke="#3a3a7a"/><path d="M4.5 2v5" stroke="#3a3a7a"/></svg><svg class="i" style="left:23px;top:156px;" width="13" height="12" viewBox="0 0 13 12"><rect x="0" y="0" width="13" height="12" fill="#3c3c3c"/><rect x="1.00" y="2.50" width="3.00" height="2.17" fill="#fff"/><rect x="1.00" y="5.67" width="3.00" height="2.17" fill="#fff"/><rect x="1.00" y="8.83" width="3.00" height="2.17" fill="#fff"/><rect x="5.00" y="2.50" width="3.00" height="2.17" fill="#fff"/><rect x="5.00" y="5.67" width="3.00" height="2.17" fill="#fff"/><rect x="5.00" y="8.83" width="3.00" height="2.17" fill="#fff"/><rect x="9.00" y="2.50" width="3.00" height="2.17" fill="#fff"/><rect x="9.00" y="5.67" width="3.00" height="2.17" fill="#fff"/><rect x="9.00" y="8.83" width="3.00" height="2.17" fill="#fff"/></svg><span class="t" style="top:154px;line-height:16px;font-size:12px;color:#1e1e1e;left:42px;letter-spacing:-0.088px;">CodeMast</span><div style="left:18px;top:181px;width:4px;height:1px;background:repeating-linear-gradient(90deg,#585858 0 1px,transparent 1px 2px);"></div><svg class="i" style="left:9.0px;top:177.0px;" width="9" height="9" viewBox="0 0 9 9"><rect x=".5" y=".5" width="8" height="8" fill="#fff" stroke="#919191"/><path d="M2 4.5h5" stroke="#3a3a7a"/><path d="M4.5 2v5" stroke="#3a3a7a"/></svg><svg class="i" style="left:23px;top:174px;" width="13" height="12" viewBox="0 0 13 12"><rect x="0" y="0" width="13" height="12" fill="#3c3c3c"/><rect x="1.00" y="2.50" width="3.00" height="2.17" fill="#fff"/><rect x="1.00" y="5.67" width="3.00" height="2.17" fill="#fff"/><rect x="1.00" y="8.83" width="3.00" height="2.17" fill="#fff"/><rect x="5.00" y="2.50" width="3.00" height="2.17" fill="#fff"/><rect x="5.00" y="5.67" width="3.00" height="2.17" fill="#fff"/><rect x="5.00" y="8.83" width="3.00" height="2.17" fill="#fff"/><rect x="9.00" y="2.50" width="3.00" height="2.17" fill="#fff"/><rect x="9.00" y="5.67" width="3.00" height="2.17" fill="#fff"/><rect x="9.00" y="8.83" width="3.00" height="2.17" fill="#fff"/></svg><span class="t" style="top:172px;line-height:16px;font-size:12px;color:#1e1e1e;left:42px;letter-spacing:-0.213px;">CodeType</span><div style="left:18px;top:199px;width:4px;height:1px;background:repeating-linear-gradient(90deg,#585858 0 1px,transparent 1px 2px);"></div><svg class="i" style="left:9.0px;top:195.0px;" width="9" height="9" viewBox="0 0 9 9"><rect x=".5" y=".5" width="8" height="8" fill="#fff" stroke="#919191"/><path d="M2 4.5h5" stroke="#3a3a7a"/><path d="M4.5 2v5" stroke="#3a3a7a"/></svg><svg class="i" style="left:23px;top:192px;" width="13" height="12" viewBox="0 0 13 12"><rect x="0" y="0" width="13" height="12" fill="#3c3c3c"/><rect x="1.00" y="2.50" width="3.00" height="2.17" fill="#fff"/><rect x="1.00" y="5.67" width="3.00" height="2.17" fill="#fff"/><rect x="1.00" y="8.83" width="3.00" height="2.17" fill="#fff"/><rect x="5.00" y="2.50" width="3.00" height="2.17" fill="#fff"/><rect x="5.00" y="5.67" width="3.00" height="2.17" fill="#fff"/><rect x="5.00" y="8.83" width="3.00" height="2.17" fill="#fff"/><rect x="9.00" y="2.50" width="3.00" height="2.17" fill="#fff"/><rect x="9.00" y="5.67" width="3.00" height="2.17" fill="#fff"/><rect x="9.00" y="8.83" width="3.00" height="2.17" fill="#fff"/></svg><span class="t" style="top:190px;line-height:16px;font-size:12px;color:#1e1e1e;left:42px;letter-spacing:-0.002px;">Customer</span><div style="left:18px;top:217px;width:4px;height:1px;background:repeating-linear-gradient(90deg,#585858 0 1px,transparent 1px 2px);"></div><svg class="i" style="left:9.0px;top:213.0px;" width="9" height="9" viewBox="0 0 9 9"><rect x=".5" y=".5" width="8" height="8" fill="#fff" stroke="#919191"/><path d="M2 4.5h5" stroke="#3a3a7a"/><path d="M4.5 2v5" stroke="#3a3a7a"/></svg><svg class="i" style="left:23px;top:210px;" width="13" height="12" viewBox="0 0 13 12"><rect x="0" y="0" width="13" height="12" fill="#3c3c3c"/><rect x="1.00" y="2.50" width="3.00" height="2.17" fill="#fff"/><rect x="1.00" y="5.67" width="3.00" height="2.17" fill="#fff"/><rect x="1.00" y="8.83" width="3.00" height="2.17" fill="#fff"/><rect x="5.00" y="2.50" width="3.00" height="2.17" fill="#fff"/><rect x="5.00" y="5.67" width="3.00" height="2.17" fill="#fff"/><rect x="5.00" y="8.83" width="3.00" height="2.17" fill="#fff"/><rect x="9.00" y="2.50" width="3.00" height="2.17" fill="#fff"/><rect x="9.00" y="5.67" width="3.00" height="2.17" fill="#fff"/><rect x="9.00" y="8.83" width="3.00" height="2.17" fill="#fff"/></svg><span class="t" style="top:208px;line-height:16px;font-size:12px;color:#1e1e1e;left:42px;letter-spacing:0.071px;">Inventory</span><div style="left:18px;top:235px;width:4px;height:1px;background:repeating-linear-gradient(90deg,#585858 0 1px,transparent 1px 2px);"></div><svg class="i" style="left:9.0px;top:231.0px;" width="9" height="9" viewBox="0 0 9 9"><rect x=".5" y=".5" width="8" height="8" fill="#fff" stroke="#919191"/><path d="M2 4.5h5" stroke="#3a3a7a"/><path d="M4.5 2v5" stroke="#3a3a7a"/></svg><svg class="i" style="left:23px;top:228px;" width="13" height="12" viewBox="0 0 13 12"><rect x="0" y="0" width="13" height="12" fill="#3c3c3c"/><rect x="1.00" y="2.50" width="3.00" height="2.17" fill="#fff"/><rect x="1.00" y="5.67" width="3.00" height="2.17" fill="#fff"/><rect x="1.00" y="8.83" width="3.00" height="2.17" fill="#fff"/><rect x="5.00" y="2.50" width="3.00" height="2.17" fill="#fff"/><rect x="5.00" y="5.67" width="3.00" height="2.17" fill="#fff"/><rect x="5.00" y="8.83" width="3.00" height="2.17" fill="#fff"/><rect x="9.00" y="2.50" width="3.00" height="2.17" fill="#fff"/><rect x="9.00" y="5.67" width="3.00" height="2.17" fill="#fff"/><rect x="9.00" y="8.83" width="3.00" height="2.17" fill="#fff"/></svg><span class="t" style="top:226px;line-height:16px;font-size:12px;color:#1e1e1e;left:42px;letter-spacing:-0.124px;">OrderDetail</span><div style="left:18px;top:253px;width:4px;height:1px;background:repeating-linear-gradient(90deg,#585858 0 1px,transparent 1px 2px);"></div><svg class="i" style="left:9.0px;top:249.0px;" width="9" height="9" viewBox="0 0 9 9"><rect x=".5" y=".5" width="8" height="8" fill="#fff" stroke="#919191"/><path d="M2 4.5h5" stroke="#3a3a7a"/><path d="M4.5 2v5" stroke="#3a3a7a"/></svg><svg class="i" style="left:23px;top:246px;" width="13" height="12" viewBox="0 0 13 12"><rect x="0" y="0" width="13" height="12" fill="#3c3c3c"/><rect x="1.00" y="2.50" width="3.00" height="2.17" fill="#fff"/><rect x="1.00" y="5.67" width="3.00" height="2.17" fill="#fff"/><rect x="1.00" y="8.83" width="3.00" height="2.17" fill="#fff"/><rect x="5.00" y="2.50" width="3.00" height="2.17" fill="#fff"/><rect x="5.00" y="5.67" width="3.00" height="2.17" fill="#fff"/><rect x="5.00" y="8.83" width="3.00" height="2.17" fill="#fff"/><rect x="9.00" y="2.50" width="3.00" height="2.17" fill="#fff"/><rect x="9.00" y="5.67" width="3.00" height="2.17" fill="#fff"/><rect x="9.00" y="8.83" width="3.00" height="2.17" fill="#fff"/></svg><span class="t" style="top:244px;line-height:16px;font-size:12px;color:#1e1e1e;left:42px;letter-spacing:-0.185px;">OrderHeader</span><div style="left:18px;top:271px;width:4px;height:1px;background:repeating-linear-gradient(90deg,#585858 0 1px,transparent 1px 2px);"></div><svg class="i" style="left:9.0px;top:267.0px;" width="9" height="9" viewBox="0 0 9 9"><rect x=".5" y=".5" width="8" height="8" fill="#fff" stroke="#919191"/><path d="M2 4.5h5" stroke="#3a3a7a"/><path d="M4.5 2v5" stroke="#3a3a7a"/></svg><svg class="i" style="left:23px;top:264px;" width="13" height="12" viewBox="0 0 13 12"><rect x="0" y="0" width="13" height="12" fill="#3c3c3c"/><rect x="1.00" y="2.50" width="3.00" height="2.17" fill="#fff"/><rect x="1.00" y="5.67" width="3.00" height="2.17" fill="#fff"/><rect x="1.00" y="8.83" width="3.00" height="2.17" fill="#fff"/><rect x="5.00" y="2.50" width="3.00" height="2.17" fill="#fff"/><rect x="5.00" y="5.67" width="3.00" height="2.17" fill="#fff"/><rect x="5.00" y="8.83" width="3.00" height="2.17" fill="#fff"/><rect x="9.00" y="2.50" width="3.00" height="2.17" fill="#fff"/><rect x="9.00" y="5.67" width="3.00" height="2.17" fill="#fff"/><rect x="9.00" y="8.83" width="3.00" height="2.17" fill="#fff"/></svg><span class="t" style="top:262px;line-height:16px;font-size:12px;color:#1e1e1e;left:42px;letter-spacing:-0.244px;">OrderSystem</span><div style="left:18px;top:289px;width:4px;height:1px;background:repeating-linear-gradient(90deg,#585858 0 1px,transparent 1px 2px);"></div><svg class="i" style="left:9.0px;top:285.0px;" width="9" height="9" viewBox="0 0 9 9"><rect x=".5" y=".5" width="8" height="8" fill="#fff" stroke="#919191"/><path d="M2 4.5h5" stroke="#3a3a7a"/><path d="M4.5 2v5" stroke="#3a3a7a"/></svg><svg class="i" style="left:23px;top:282px;" width="13" height="12" viewBox="0 0 13 12"><rect x="0" y="0" width="13" height="12" fill="#3c3c3c"/><rect x="1.00" y="2.50" width="3.00" height="2.17" fill="#fff"/><rect x="1.00" y="5.67" width="3.00" height="2.17" fill="#fff"/><rect x="1.00" y="8.83" width="3.00" height="2.17" fill="#fff"/><rect x="5.00" y="2.50" width="3.00" height="2.17" fill="#fff"/><rect x="5.00" y="5.67" width="3.00" height="2.17" fill="#fff"/><rect x="5.00" y="8.83" width="3.00" height="2.17" fill="#fff"/><rect x="9.00" y="2.50" width="3.00" height="2.17" fill="#fff"/><rect x="9.00" y="5.67" width="3.00" height="2.17" fill="#fff"/><rect x="9.00" y="8.83" width="3.00" height="2.17" fill="#fff"/></svg><span class="t" style="top:280px;line-height:16px;font-size:12px;color:#1e1e1e;left:42px;letter-spacing:-0.550px;">SalesPerson</span><div style="left:18px;top:307px;width:4px;height:1px;background:repeating-linear-gradient(90deg,#585858 0 1px,transparent 1px 2px);"></div><svg class="i" style="left:9.0px;top:303.0px;" width="9" height="9" viewBox="0 0 9 9"><rect x=".5" y=".5" width="8" height="8" fill="#fff" stroke="#919191"/><path d="M2 4.5h5" stroke="#3a3a7a"/><path d="M4.5 2v5" stroke="#3a3a7a"/></svg><svg class="i" style="left:23px;top:300px;" width="13" height="12" viewBox="0 0 13 12"><rect x="0" y="0" width="13" height="12" fill="#3c3c3c"/><rect x="1.00" y="2.50" width="3.00" height="2.17" fill="#fff"/><rect x="1.00" y="5.67" width="3.00" height="2.17" fill="#fff"/><rect x="1.00" y="8.83" width="3.00" height="2.17" fill="#fff"/><rect x="5.00" y="2.50" width="3.00" height="2.17" fill="#fff"/><rect x="5.00" y="5.67" width="3.00" height="2.17" fill="#fff"/><rect x="5.00" y="8.83" width="3.00" height="2.17" fill="#fff"/><rect x="9.00" y="2.50" width="3.00" height="2.17" fill="#fff"/><rect x="9.00" y="5.67" width="3.00" height="2.17" fill="#fff"/><rect x="9.00" y="8.83" width="3.00" height="2.17" fill="#fff"/></svg><span class="t" style="top:298px;line-height:16px;font-size:12px;color:#1e1e1e;left:42px;letter-spacing:-0.008px;">Vendor</span><div style="left:18px;top:325px;width:4px;height:1px;background:repeating-linear-gradient(90deg,#585858 0 1px,transparent 1px 2px);"></div><svg class="i" style="left:9.0px;top:321.0px;" width="9" height="9" viewBox="0 0 9 9"><rect x=".5" y=".5" width="8" height="8" fill="#fff" stroke="#919191"/><path d="M2 4.5h5" stroke="#3a3a7a"/><path d="M4.5 2v5" stroke="#3a3a7a"/></svg><svg class="i" style="left:23px;top:318px;" width="13" height="12" viewBox="0 0 13 12"><rect x="0" y="0" width="13" height="12" fill="#3c3c3c"/><rect x="1.00" y="2.50" width="3.00" height="2.17" fill="#fff"/><rect x="1.00" y="5.67" width="3.00" height="2.17" fill="#fff"/><rect x="1.00" y="8.83" width="3.00" height="2.17" fill="#fff"/><rect x="5.00" y="2.50" width="3.00" height="2.17" fill="#fff"/><rect x="5.00" y="5.67" width="3.00" height="2.17" fill="#fff"/><rect x="5.00" y="8.83" width="3.00" height="2.17" fill="#fff"/><rect x="9.00" y="2.50" width="3.00" height="2.17" fill="#fff"/><rect x="9.00" y="5.67" width="3.00" height="2.17" fill="#fff"/><rect x="9.00" y="8.83" width="3.00" height="2.17" fill="#fff"/></svg><span class="t" style="top:316px;line-height:16px;font-size:12px;color:#1e1e1e;left:42px;letter-spacing:-0.265px;">WebAppServerProps</span><div style="left:18px;top:343px;width:4px;height:1px;background:repeating-linear-gradient(90deg,#585858 0 1px,transparent 1px 2px);"></div><svg class="i" style="left:9.0px;top:339.0px;" width="9" height="9" viewBox="0 0 9 9"><rect x=".5" y=".5" width="8" height="8" fill="#fff" stroke="#919191"/><path d="M2 4.5h5" stroke="#3a3a7a"/><path d="M4.5 2v5" stroke="#3a3a7a"/></svg><svg class="i" style="left:23px;top:336px;" width="13" height="12" viewBox="0 0 13 12"><rect x="0" y="0" width="13" height="12" fill="#3c3c3c"/><rect x="1.00" y="2.50" width="3.00" height="2.17" fill="#fff"/><rect x="1.00" y="5.67" width="3.00" height="2.17" fill="#fff"/><rect x="1.00" y="8.83" width="3.00" height="2.17" fill="#fff"/><rect x="5.00" y="2.50" width="3.00" height="2.17" fill="#fff"/><rect x="5.00" y="5.67" width="3.00" height="2.17" fill="#fff"/><rect x="5.00" y="8.83" width="3.00" height="2.17" fill="#fff"/><rect x="9.00" y="2.50" width="3.00" height="2.17" fill="#fff"/><rect x="9.00" y="5.67" width="3.00" height="2.17" fill="#fff"/><rect x="9.00" y="8.83" width="3.00" height="2.17" fill="#fff"/></svg><span class="t" style="top:334px;line-height:16px;font-size:12px;color:#1e1e1e;left:42px;letter-spacing:-0.269px;">WebAppSession</span><div style="left:18px;top:361px;width:4px;height:1px;background:repeating-linear-gradient(90deg,#585858 0 1px,transparent 1px 2px);"></div><svg class="i" style="left:9.0px;top:357.0px;" width="9" height="9" viewBox="0 0 9 9"><rect x=".5" y=".5" width="8" height="8" fill="#fff" stroke="#919191"/><path d="M2 4.5h5" stroke="#3a3a7a"/><path d="M4.5 2v5" stroke="#3a3a7a"/></svg><svg class="i" style="left:23px;top:354px;" width="13" height="12" viewBox="0 0 13 12"><rect x="0" y="0" width="13" height="12" fill="#3c3c3c"/><rect x="1.00" y="2.50" width="3.00" height="2.17" fill="#fff"/><rect x="1.00" y="5.67" width="3.00" height="2.17" fill="#fff"/><rect x="1.00" y="8.83" width="3.00" height="2.17" fill="#fff"/><rect x="5.00" y="2.50" width="3.00" height="2.17" fill="#fff"/><rect x="5.00" y="5.67" width="3.00" height="2.17" fill="#fff"/><rect x="5.00" y="8.83" width="3.00" height="2.17" fill="#fff"/><rect x="9.00" y="2.50" width="3.00" height="2.17" fill="#fff"/><rect x="9.00" y="5.67" width="3.00" height="2.17" fill="#fff"/><rect x="9.00" y="8.83" width="3.00" height="2.17" fill="#fff"/></svg><span class="t" style="top:352px;line-height:16px;font-size:12px;color:#1e1e1e;left:42px;letter-spacing:-0.216px;">WebAppUser</span><div style="left:2px;top:743px;width:101px;height:23px;background:#fbfbfc;"></div><div style="left:104px;top:744px;width:98px;height:21px;background:#ececee;"></div><div style="left:203px;top:744px;width:98px;height:21px;background:#ececee;"></div><div style="left:103px;top:744px;width:1px;height:21px;background:#d0d0d6;"></div><div style="left:202px;top:744px;width:1px;height:21px;background:#d0d0d6;"></div><div style="left:301px;top:744px;width:1px;height:21px;background:#d0d0d6;"></div><svg class="i" style="left:4px;top:747px;" width="16" height="15" viewBox="0 0 16 15"><path d="M4 1h11v8M3 3h10" fill="none" stroke="#424242" stroke-width="1.2"/><rect x="0.5" y="5" width="10" height="9" fill="#424242"/><rect x="1.50" y="7.50" width="2.00" height="1.17" fill="#fff"/><rect x="1.50" y="9.67" width="2.00" height="1.17" fill="#fff"/><rect x="1.50" y="11.83" width="2.00" height="1.17" fill="#fff"/><rect x="4.50" y="7.50" width="2.00" height="1.17" fill="#fff"/><rect x="4.50" y="9.67" width="2.00" height="1.17" fill="#fff"/><rect x="4.50" y="11.83" width="2.00" height="1.17" fill="#fff"/><rect x="7.50" y="7.50" width="2.00" height="1.17" fill="#fff"/><rect x="7.50" y="9.67" width="2.00" height="1.17" fill="#fff"/><rect x="7.50" y="11.83" width="2.00" height="1.17" fill="#fff"/><circle cx="10" cy="10" r="2.4" fill="#f7f7f9" stroke="#424242" stroke-width="1.1"/><path d="M11.8 12l2.7 3" stroke="#424242" stroke-width="1.6"/></svg><span class="t" style="top:746.5px;line-height:16px;font-size:12px;color:#1e1e1e;left:24px;letter-spacing:-0.266px;">Table Explorer</span><svg class="i" style="left:107px;top:747px;" width="14" height="14" viewBox="0 0 14 14"><rect x="0.5" y="1.0" width="13" height="12" fill="#fdf3e0" stroke="#424242"/><rect x="0" y="0.5" width="14" height="2.5" fill="#424242"/><path d="M3.5 6l2-1.5l2.5 2l-1.5 2zM7 9l2-1.2l2 2l-1.8 1.8z" fill="#dcb67a" stroke="#b98a3c" stroke-width=".6"/></svg><span class="t" style="top:746.5px;line-height:16px;font-size:12px;color:#1e1e1e;left:126px;letter-spacing:-0.170px;">Code Explor...</span><svg class="i" style="left:208px;top:747px;" width="16" height="15" viewBox="0 0 16 15"><g transform="scale(.95)"><path d="M8 1C12 .5 15.500 2.500 14.600 5.500C14 7.200 11 7 10.300 8.400C11 9.700 15 9 15 11.500C15 14 11.500 15.500 8 15.500C4 15.500 1 12.500 1 8.500C1 4.500 4 1 8 1Z" fill="#333"/><circle cx="4.600" cy="4.800" r=".95" fill="#fff"/><circle cx="7.300" cy="3.200" r=".95" fill="#fff"/><circle cx="3" cy="8" r=".95" fill="#fff"/><circle cx="3.800" cy="11.200" r=".95" fill="#fff"/><circle cx="6.500" cy="13.200" r=".95" fill="#fff"/></g></svg><span class="t" style="top:746.5px;line-height:16px;font-size:12px;color:#1e1e1e;left:227px;letter-spacing:-0.402px;">Class Palett...</span><div style="left:0px;top:772px;width:310px;height:19px;background:#c0cbdc;border-top:1px solid #9c9ca4;"></div><span class="t" style="top:774px;line-height:16px;font-size:12px;color:#1e1e1e;left:4px;letter-spacing:-0.145px;">File Navigator</span><svg class="i" style="left:281px;top:777.5px;" width="6" height="9" viewBox="0 0 6 9"><path d="M1 .5h4M1.500 .5v4.500M4.500 .5v4.500M3.800 .5v4.500M0 5h6M3 5v3.500" stroke="#1e1e1e" stroke-width="1" fill="none"/></svg><svg class="i" style="left:297.5px;top:778.0px;" width="7" height="7" viewBox="0 0 7 7"><path d="M.5 .5l6 6M6.5 .5l-6 6" stroke="#1e1e1e" stroke-width="1.2"/></svg><div style="left:0px;top:791px;width:310px;height:226px;background:#ffffff;border-left:1px solid #828790;border-right:1px solid #c8c8d0;"></div><svg class="i" style="left:9px;top:796px;" width="10" height="12" viewBox="0 0 10 12"><path d="M0.5 0.5h6l3 3v8h-9z" fill="#fff" stroke="#333" stroke-width="1"/><path d="M6.5 0.5v3h3" fill="none" stroke="#333" stroke-width="0.8"/><path d="M2.500 5.500h5M2.500 7.500h5M2.500 9.500h5" stroke="#555" stroke-width=".6"/></svg><span class="t" style="top:794px;line-height:16px;font-size:12px;color:#1e1e1e;left:27px;font-weight:bold;letter-spacing:-0.042px;">InfiniteScrollingDemo.wo</span><div style="left:316px;top:101px;width:1309px;height:21px;background:#ecedf4;"></div><div style="left:318px;top:104px;width:161px;height:19px;background:#127cc8;"></div><span class="t" style="top:104.5px;line-height:16px;font-size:12px;color:#fff;left:324px;letter-spacing:0.081px;">InfiniteScrollingDemo.wo</span><svg class="i" style="left:466px;top:108px;" width="9" height="9" viewBox="0 0 9 9"><path d="M1 1l7 7M8 1l-7 7" stroke="#fff" stroke-width="2"/></svg><div style="left:316px;top:122px;width:1309px;height:1px;background:#2c7fb8;"></div><svg class="i" style="left:1572px;top:106px;" width="6" height="10" viewBox="0 0 6 10"><path d="M5.5 .5v9l-5-4.5z" fill="none" stroke="#a0a0a8" stroke-width=".9"/></svg><svg class="i" style="left:1586px;top:106px;" width="6" height="10" viewBox="0 0 6 10"><path d="M.5 .5v9l5-4.5z" fill="none" stroke="#a0a0a8" stroke-width=".9"/></svg><svg class="i" style="left:1598.5px;top:109px;" width="8" height="4.5" viewBox="0 0 8 4.5"><path d="M0 0h8l-4 4.500z" fill="#555"/></svg><svg class="i" style="left:1612px;top:106px;" width="10" height="9" viewBox="0 0 10 9"><path d="M.5 .5l9 8M9.500 .5l-9 8" stroke="#4a4a4a" stroke-width="1.300"/></svg><div style="left:316px;top:123px;width:1293px;height:682px;background:#ffffff;"></div><div style="left:316px;top:123px;width:24px;height:682px;background:#dcdeec;"></div><div style="left:1626px;top:123px;width:5px;height:894px;background:#f7f7f9;"></div><div style="left:1609px;top:123px;width:16px;height:682px;background:#f0f0f0;"></div><div style="left:1609px;top:123px;width:15px;height:7px;background:#cbcbcb;"></div><svg class="i" style="left:1612.5px;top:136.5px;" width="8" height="5" viewBox="0 0 8 5"><path d="M.5 4.500l3.500-3.500l3.500 3.500" fill="none" stroke="#454545" stroke-width="1.900"/></svg><svg class="i" style="left:1612.5px;top:793.5px;" width="8" height="5" viewBox="0 0 8 5"><path d="M.5 .5l3.500 3.500l3.500-3.500" fill="none" stroke="#454545" stroke-width="1.900"/></svg><div style="left:1609px;top:289px;width:15px;height:291px;background:#cdcdcd;"></div><div style="left:316px;top:805px;width:1293px;height:15px;background:#f0f0f0;"></div><div style="left:316px;top:805px;width:7px;height:15px;background:#cdcdcd;"></div><svg class="i" style="left:328.5px;top:808px;" width="5" height="8" viewBox="0 0 5 8"><path d="M4.500 .5l-3.500 3.500l3.500 3.500" fill="none" stroke="#454545" stroke-width="1.900"/></svg><svg class="i" style="left:1597.5px;top:808px;" width="5" height="8" viewBox="0 0 5 8"><path d="M.5 .5l3.500 3.500l-3.500 3.500" fill="none" stroke="#454545" stroke-width="1.900"/></svg><div style="left:340px;top:805px;width:861px;height:15px;background:#cdcdcd;"></div><div style="left:1609px;top:805px;width:16px;height:15px;background:#f0f0f0;"></div><div style="left:318px;top:123px;width:1290px;height:682px;overflow:hidden"><span style="font-family:'Liberation Mono',monospace;font-size:14px;letter-spacing:-0.4px;line-height:18px;white-space:pre;display:block;position:absolute;left:26px;top:0.5px;color:#1e1e1e">19</span><span style="font-family:'Liberation Mono',monospace;font-size:14px;letter-spacing:-0.4px;line-height:18px;white-space:pre;display:block;position:absolute;left:26px;top:18.5px;color:#1e1e1e">20</span><span style="font-family:'Liberation Mono',monospace;font-size:14px;letter-spacing:-0.4px;line-height:18px;white-space:pre;display:block;position:absolute;left:26px;top:36.5px;color:#1e1e1e">21</span><span style="font-family:'Liberation Mono',monospace;font-size:14px;letter-spacing:-0.4px;line-height:18px;white-space:pre;display:block;position:absolute;left:26px;top:54.5px;color:#1e1e1e">22</span><span style="font-family:'Liberation Mono',monospace;font-size:14px;letter-spacing:-0.4px;line-height:18px;white-space:pre;display:block;position:absolute;left:26px;top:72.5px;color:#1e1e1e">23</span><span style="font-family:'Liberation Mono',monospace;font-size:14px;letter-spacing:-0.4px;line-height:18px;white-space:pre;display:block;position:absolute;left:26px;top:90.5px;color:#1e1e1e">24</span><span style="font-family:'Liberation Mono',monospace;font-size:14px;letter-spacing:-0.4px;line-height:18px;white-space:pre;display:block;position:absolute;left:26px;top:108.5px;color:#1e1e1e">25</span><span style="font-family:'Liberation Mono',monospace;font-size:14px;letter-spacing:-0.4px;line-height:18px;white-space:pre;display:block;position:absolute;left:26px;top:126.5px;color:#1e1e1e">26</span><span style="font-family:'Liberation Mono',monospace;font-size:14px;letter-spacing:-0.4px;line-height:18px;white-space:pre;display:block;position:absolute;left:26px;top:144.5px;color:#1e1e1e">27</span><span style="font-family:'Liberation Mono',monospace;font-size:14px;letter-spacing:-0.4px;line-height:18px;white-space:pre;display:block;position:absolute;left:26px;top:162.5px;color:#1e1e1e">28</span><span style="font-family:'Liberation Mono',monospace;font-size:14px;letter-spacing:-0.4px;line-height:18px;white-space:pre;display:block;position:absolute;left:26px;top:180.5px;color:#1e1e1e">29</span><span style="font-family:'Liberation Mono',monospace;font-size:14px;letter-spacing:-0.4px;line-height:18px;white-space:pre;display:block;position:absolute;left:26px;top:198.5px;color:#1e1e1e">30</span><span style="font-family:'Liberation Mono',monospace;font-size:14px;letter-spacing:-0.4px;line-height:18px;white-space:pre;display:block;position:absolute;left:26px;top:216.5px;color:#1e1e1e">31</span><span style="font-family:'Liberation Mono',monospace;font-size:14px;letter-spacing:-0.4px;line-height:18px;white-space:pre;display:block;position:absolute;left:26px;top:234.5px;color:#1e1e1e">32</span><span style="font-family:'Liberation Mono',monospace;font-size:14px;letter-spacing:-0.4px;line-height:18px;white-space:pre;display:block;position:absolute;left:26px;top:252.5px;color:#1e1e1e">33</span><span style="font-family:'Liberation Mono',monospace;font-size:14px;letter-spacing:-0.4px;line-height:18px;white-space:pre;display:block;position:absolute;left:26px;top:270.5px;color:#1e1e1e">34</span><span style="font-family:'Liberation Mono',monospace;font-size:14px;letter-spacing:-0.4px;line-height:18px;white-space:pre;display:block;position:absolute;left:26px;top:288.5px;color:#1e1e1e">35</span><span style="font-family:'Liberation Mono',monospace;font-size:14px;letter-spacing:-0.4px;line-height:18px;white-space:pre;display:block;position:absolute;left:26px;top:306.5px;color:#1e1e1e">36</span><span style="font-family:'Liberation Mono',monospace;font-size:14px;letter-spacing:-0.4px;line-height:18px;white-space:pre;display:block;position:absolute;left:26px;top:324.5px;color:#1e1e1e">37</span><span style="font-family:'Liberation Mono',monospace;font-size:14px;letter-spacing:-0.4px;line-height:18px;white-space:pre;display:block;position:absolute;left:26px;top:342.5px;color:#1e1e1e">38</span><span style="font-family:'Liberation Mono',monospace;font-size:14px;letter-spacing:-0.4px;line-height:18px;white-space:pre;display:block;position:absolute;left:26px;top:360.5px;color:#1e1e1e">39</span><span style="font-family:'Liberation Mono',monospace;font-size:14px;letter-spacing:-0.4px;line-height:18px;white-space:pre;display:block;position:absolute;left:26px;top:378.5px;color:#1e1e1e">40</span><span style="font-family:'Liberation Mono',monospace;font-size:14px;letter-spacing:-0.4px;line-height:18px;white-space:pre;display:block;position:absolute;left:26px;top:396.5px;color:#1e1e1e">41</span><span style="font-family:'Liberation Mono',monospace;font-size:14px;letter-spacing:-0.4px;line-height:18px;white-space:pre;display:block;position:absolute;left:26px;top:414.5px;color:#1e1e1e">42</span><span style="font-family:'Liberation Mono',monospace;font-size:14px;letter-spacing:-0.4px;line-height:18px;white-space:pre;display:block;position:absolute;left:26px;top:432.5px;color:#1e1e1e">43</span><span style="font-family:'Liberation Mono',monospace;font-size:14px;letter-spacing:-0.4px;line-height:18px;white-space:pre;display:block;position:absolute;left:26px;top:450.5px;color:#1e1e1e">44</span><span style="font-family:'Liberation Mono',monospace;font-size:14px;letter-spacing:-0.4px;line-height:18px;white-space:pre;display:block;position:absolute;left:26px;top:468.5px;color:#1e1e1e">45</span><span style="font-family:'Liberation Mono',monospace;font-size:14px;letter-spacing:-0.4px;line-height:18px;white-space:pre;display:block;position:absolute;left:26px;top:486.5px;color:#1e1e1e">46</span><span style="font-family:'Liberation Mono',monospace;font-size:14px;letter-spacing:-0.4px;line-height:18px;white-space:pre;display:block;position:absolute;left:26px;top:504.5px;color:#1e1e1e">47</span><span style="font-family:'Liberation Mono',monospace;font-size:14px;letter-spacing:-0.4px;line-height:18px;white-space:pre;display:block;position:absolute;left:26px;top:522.5px;color:#1e1e1e">48</span><span style="font-family:'Liberation Mono',monospace;font-size:14px;letter-spacing:-0.4px;line-height:18px;white-space:pre;display:block;position:absolute;left:26px;top:540.5px;color:#1e1e1e">49</span><span style="font-family:'Liberation Mono',monospace;font-size:14px;letter-spacing:-0.4px;line-height:18px;white-space:pre;display:block;position:absolute;left:26px;top:558.5px;color:#1e1e1e">50</span><span style="font-family:'Liberation Mono',monospace;font-size:14px;letter-spacing:-0.4px;line-height:18px;white-space:pre;display:block;position:absolute;left:26px;top:576.5px;color:#1e1e1e">51</span><span style="font-family:'Liberation Mono',monospace;font-size:14px;letter-spacing:-0.4px;line-height:18px;white-space:pre;display:block;position:absolute;left:26px;top:594.5px;color:#1e1e1e">52</span><span style="font-family:'Liberation Mono',monospace;font-size:14px;letter-spacing:-0.4px;line-height:18px;white-space:pre;display:block;position:absolute;left:26px;top:612.5px;color:#1e1e1e">53</span><span style="font-family:'Liberation Mono',monospace;font-size:14px;letter-spacing:-0.4px;line-height:18px;white-space:pre;display:block;position:absolute;left:26px;top:630.5px;color:#1e1e1e">54</span><span style="font-family:'Liberation Mono',monospace;font-size:14px;letter-spacing:-0.4px;line-height:18px;white-space:pre;display:block;position:absolute;left:26px;top:648.5px;color:#1e1e1e">55</span><span style="font-family:'Liberation Mono',monospace;font-size:14px;letter-spacing:-0.4px;line-height:18px;white-space:pre;display:block;position:absolute;left:26px;top:666.5px;color:#1e1e1e">56</span><span style="font-family:'Liberation Mono',monospace;font-size:14px;letter-spacing:-0.4px;line-height:18px;white-space:pre;display:block;position:absolute;left:82px;top:0.5px;color:#1e1e1e"><span class="k">End_Object</span></span><span style="font-family:'Liberation Mono',monospace;font-size:14px;letter-spacing:-0.4px;line-height:18px;white-space:pre;display:block;position:absolute;left:82px;top:36.5px;color:#1e1e1e"><span class="k">Object</span> oOrderHeader_DD <span class="k">is a</span> cOrderHeaderDataDictionary</span><span style="font-family:'Liberation Mono',monospace;font-size:14px;letter-spacing:-0.4px;line-height:18px;white-space:pre;display:block;position:absolute;left:114px;top:54.5px;color:#1e1e1e"><span class="k">Set</span> DDO_Server <span class="k">to</span> oSalesPerson_DD</span><span style="font-family:'Liberation Mono',monospace;font-size:14px;letter-spacing:-0.4px;line-height:18px;white-space:pre;display:block;position:absolute;left:114px;top:72.5px;color:#1e1e1e"><span class="k">Set</span> DDO_Server <span class="k">to</span> oCustomer_DD</span><span style="font-family:'Liberation Mono',monospace;font-size:14px;letter-spacing:-0.4px;line-height:18px;white-space:pre;display:block;position:absolute;left:82px;top:90.5px;color:#1e1e1e"><span class="k">End_Object</span></span><span style="font-family:'Liberation Mono',monospace;font-size:14px;letter-spacing:-0.4px;line-height:18px;white-space:pre;display:block;position:absolute;left:82px;top:126.5px;color:#1e1e1e"><span class="k">Set</span> Main_DD <span class="k">to</span> oOrderHeader_DD</span><span style="font-family:'Liberation Mono',monospace;font-size:14px;letter-spacing:-0.4px;line-height:18px;white-space:pre;display:block;position:absolute;left:82px;top:144.5px;color:#1e1e1e"><span class="k">Set</span> Server <span class="k">to</span> oOrderHeader_DD</span><span style="font-family:'Liberation Mono',monospace;font-size:14px;letter-spacing:-0.4px;line-height:18px;white-space:pre;display:block;position:absolute;left:82px;top:180.5px;color:#1e1e1e"><span class="k">Set</span> peWebViewStyle <span class="k">to</span> wvsDrillDown</span><span style="font-family:'Liberation Mono',monospace;font-size:14px;letter-spacing:-0.4px;line-height:18px;white-space:pre;display:block;position:absolute;left:82px;top:198.5px;color:#1e1e1e"><span class="k">Set</span> peViewType <span class="k">to</span> vtSelect</span><span style="font-family:'Liberation Mono',monospace;font-size:14px;letter-spacing:-0.4px;line-height:18px;white-space:pre;display:block;position:absolute;left:82px;top:216.5px;color:#1e1e1e"><span class="k">Set</span> psCaption <span class="k">to</span> <span class="s">&quot;InfiniteScrollingDemo&quot;</span></span><span style="font-family:'Liberation Mono',monospace;font-size:14px;letter-spacing:-0.4px;line-height:18px;white-space:pre;display:block;position:absolute;left:82px;top:234.5px;color:#1e1e1e"><span class="k">Set</span> piMaxWidth <span class="k">to</span> 1024</span><span style="font-family:'Liberation Mono',monospace;font-size:14px;letter-spacing:-0.4px;line-height:18px;white-space:pre;display:block;position:absolute;left:82px;top:252.5px;color:#1e1e1e"><span class="k">Set</span> piColumnCount <span class="k">to</span> 6</span><span style="font-family:'Liberation Mono',monospace;font-size:14px;letter-spacing:-0.4px;line-height:18px;white-space:pre;display:block;position:absolute;left:82px;top:288.5px;color:#1e1e1e"><span class="k">WebSetResponsive</span> piColumnCount rmTabletPortrait <span class="k">to</span> 3</span><span style="font-family:'Liberation Mono',monospace;font-size:14px;letter-spacing:-0.4px;line-height:18px;white-space:pre;display:block;position:absolute;left:82px;top:324.5px;color:#1e1e1e"><span class="k">Object</span> oList <span class="k">is a</span> cWebList</span><span style="font-family:'Liberation Mono',monospace;font-size:14px;letter-spacing:-0.4px;line-height:18px;white-space:pre;display:block;position:absolute;left:114px;top:342.5px;color:#1e1e1e"><span class="k">Set</span> pbFillHeight <span class="k">to</span> <span class="k">True</span></span><span style="font-family:'Liberation Mono',monospace;font-size:14px;letter-spacing:-0.4px;line-height:18px;white-space:pre;display:block;position:absolute;left:114px;top:360.5px;color:#1e1e1e"><span class="k">Set</span> pbShowLabel <span class="k">to</span> <span class="k">False</span></span><span style="font-family:'Liberation Mono',monospace;font-size:14px;letter-spacing:-0.4px;line-height:18px;white-space:pre;display:block;position:absolute;left:114px;top:378.5px;color:#1e1e1e"><span class="k">Set</span> piOrdering <span class="k">to</span> 1</span><span style="font-family:'Liberation Mono',monospace;font-size:14px;letter-spacing:-0.4px;line-height:18px;white-space:pre;display:block;position:absolute;left:114px;top:396.5px;color:#1e1e1e"><span class="k">Set</span> pbColumnSortable <span class="k">to</span> <span class="k">True</span></span><span style="font-family:'Liberation Mono',monospace;font-size:14px;letter-spacing:-0.4px;line-height:18px;white-space:pre;display:block;position:absolute;left:114px;top:414.5px;color:#1e1e1e"><span class="k">Set</span> pbScroll <span class="k">to</span> <span class="k">False</span></span><span style="font-family:'Liberation Mono',monospace;font-size:14px;letter-spacing:-0.4px;line-height:18px;white-space:pre;display:block;position:absolute;left:114px;top:450.5px;color:#1e1e1e"><span class="k">Object</span> oCustomerNumber <span class="k">is a</span> cWebColumn</span><span style="font-family:'Liberation Mono',monospace;font-size:14px;letter-spacing:-0.4px;line-height:18px;white-space:pre;display:block;position:absolute;left:146px;top:468.5px;color:#1e1e1e"><span class="k">Entry_Item</span> Customer.Customer_Number</span><span style="font-family:'Liberation Mono',monospace;font-size:14px;letter-spacing:-0.4px;line-height:18px;white-space:pre;display:block;position:absolute;left:146px;top:486.5px;color:#1e1e1e"><span class="k">Set</span> piWidth <span class="k">to</span> 50</span><span style="font-family:'Liberation Mono',monospace;font-size:14px;letter-spacing:-0.4px;line-height:18px;white-space:pre;display:block;position:absolute;left:146px;top:504.5px;color:#1e1e1e"><span class="k">Set</span> psCaption <span class="k">to</span> <span class="s">&quot;Number&quot;</span></span><span style="font-family:'Liberation Mono',monospace;font-size:14px;letter-spacing:-0.4px;line-height:18px;white-space:pre;display:block;position:absolute;left:146px;top:522.5px;color:#1e1e1e"><span class="k">Set</span> pbPromptButton <span class="k">to</span> <span class="k">False</span></span><span style="font-family:'Liberation Mono',monospace;font-size:14px;letter-spacing:-0.4px;line-height:18px;white-space:pre;display:block;position:absolute;left:114px;top:540.5px;color:#1e1e1e"><span class="k">End_Object</span></span><span style="font-family:'Liberation Mono',monospace;font-size:14px;letter-spacing:-0.4px;line-height:18px;white-space:pre;display:block;position:absolute;left:114px;top:576.5px;color:#1e1e1e"><span class="k">Object</span> oCustomerName <span class="k">is a</span> cWebColumn</span><span style="font-family:'Liberation Mono',monospace;font-size:14px;letter-spacing:-0.4px;line-height:18px;white-space:pre;display:block;position:absolute;left:146px;top:594.5px;color:#1e1e1e"><span class="k">Entry_Item</span> Customer.Name</span><span style="font-family:'Liberation Mono',monospace;font-size:14px;letter-spacing:-0.4px;line-height:18px;white-space:pre;display:block;position:absolute;left:146px;top:612.5px;color:#1e1e1e"><span class="k">Set</span> piWidth <span class="k">to</span> 200</span><span style="font-family:'Liberation Mono',monospace;font-size:14px;letter-spacing:-0.4px;line-height:18px;white-space:pre;display:block;position:absolute;left:146px;top:630.5px;color:#1e1e1e"><span class="k">Set</span> psCaption <span class="k">to</span> <span class="s">&quot;Customer Name&quot;</span></span><span style="font-family:'Liberation Mono',monospace;font-size:14px;letter-spacing:-0.4px;line-height:18px;white-space:pre;display:block;position:absolute;left:146px;top:648.5px;color:#1e1e1e"><span class="k">Set</span> pbPromptButton <span class="k">to</span> <span class="k">False</span></span><span style="font-family:'Liberation Mono',monospace;font-size:14px;letter-spacing:-0.4px;line-height:18px;white-space:pre;display:block;position:absolute;left:114px;top:666.5px;color:#1e1e1e"><span class="k">End_Object</span></span></div><div style="left:394px;top:446px;width:527px;height:346px;border:3px solid #e8430f;"></div><svg class="i" style="left:673px;top:547px;" width="9" height="16" viewBox="0 0 9 16"><path d="M1 .5h2.5l1 1l1-1h2.500M1 15.500h2.500l1-1l1 1h2.500M4.500 1.500v13" fill="none" stroke="#1e1e1e" stroke-width="1"/></svg><div style="left:536px;top:556px;width:294px;height:21px;background:#ffffe1;border:1px solid #767676;box-shadow:2px 2px 2px rgba(0,0,0,.4);"></div><span class="t" style="top:558.5px;line-height:16px;font-size:12px;color:#1e1e1e;left:543.5px;letter-spacing:-0.170px;">Property</span><span class="t" style="top:558.5px;line-height:16px;font-size:12px;color:#1e1e1e;left:591.7px;font-weight:bold;letter-spacing:-0.418px;">Boolean pbScroll</span><span class="t" style="top:558.5px;line-height:16px;font-size:12px;color:#1e1e1e;left:686.7px;letter-spacing:0.133px;">// { WebProperty=Client }</span><div style="left:533px;top:584px;width:374.5px;height:192px;background:#ffffff;border-left:1px solid #e4e4e4;border-top:1px solid #e4e4e4;box-shadow:1.500px 1.500px 0 #7a7a7a,3px 3px 2px rgba(0,0,0,.4);"></div><svg class="i" style="left:541.5px;top:591.5px;" width="10.5" height="9" viewBox="0 0 10.5 9"><rect x=".5" y=".5" width="9.500" height="8" rx="1.200" fill="#e4e6ec" stroke="#8e9098"/><rect x="1.200" y="1.200" width="8" height="3" fill="#f8f8fa"/><path d="M3.500 3h4M3.500 4.700h4M3.500 6.400h4" stroke="#5a5a66" stroke-width=".8"/></svg><span class="t" style="top:588px;line-height:16px;font-size:12px;color:#1e1e1e;left:560px;letter-spacing:-0.171px;">faCompressed</span><svg class="i" style="left:541.5px;top:610.5px;" width="10.5" height="9" viewBox="0 0 10.5 9"><rect x=".5" y=".5" width="9.500" height="8" rx="1.200" fill="#e4e6ec" stroke="#8e9098"/><rect x="1.200" y="1.200" width="8" height="3" fill="#f8f8fa"/><path d="M3.500 3h4M3.500 4.700h4M3.500 6.400h4" stroke="#5a5a66" stroke-width=".8"/></svg><span class="t" style="top:607px;line-height:16px;font-size:12px;color:#1e1e1e;left:560px;letter-spacing:0.089px;">faDirectory</span><svg class="i" style="left:541.5px;top:629.5px;" width="10.5" height="9" viewBox="0 0 10.5 9"><rect x=".5" y=".5" width="9.500" height="8" rx="1.200" fill="#e4e6ec" stroke="#8e9098"/><rect x="1.200" y="1.200" width="8" height="3" fill="#f8f8fa"/><path d="M3.500 3h4M3.500 4.700h4M3.500 6.400h4" stroke="#5a5a66" stroke-width=".8"/></svg><span class="t" style="top:626px;line-height:16px;font-size:12px;color:#1e1e1e;left:560px;letter-spacing:-0.004px;">faEncrypted</span><svg class="i" style="left:541.5px;top:648.5px;" width="10.5" height="9" viewBox="0 0 10.5 9"><rect x=".5" y=".5" width="9.500" height="8" rx="1.200" fill="#e4e6ec" stroke="#8e9098"/><rect x="1.200" y="1.200" width="8" height="3" fill="#f8f8fa"/><path d="M3.500 3h4M3.500 4.700h4M3.500 6.400h4" stroke="#5a5a66" stroke-width=".8"/></svg><span class="t" style="top:645px;line-height:16px;font-size:12px;color:#1e1e1e;left:560px;letter-spacing:0.119px;">faHidden</span><svg class="i" style="left:541.5px;top:667.5px;" width="10.5" height="9" viewBox="0 0 10.5 9"><rect x=".5" y=".5" width="9.500" height="8" rx="1.200" fill="#e4e6ec" stroke="#8e9098"/><rect x="1.200" y="1.200" width="8" height="3" fill="#f8f8fa"/><path d="M3.500 3h4M3.500 4.700h4M3.500 6.400h4" stroke="#5a5a66" stroke-width=".8"/></svg><div style="left:556px;top:662px;width:333px;height:19px;background:#3c9bf3;border:1px dotted #0a1420;"></div><span class="t" style="top:664px;line-height:16px;font-size:12px;color:#fff;left:560px;letter-spacing:-0.469px;">False</span><svg class="i" style="left:541.5px;top:686.5px;" width="10.5" height="9" viewBox="0 0 10.5 9"><rect x=".5" y=".5" width="9.500" height="8" rx="1.200" fill="#e4e6ec" stroke="#8e9098"/><rect x="1.200" y="1.200" width="8" height="3" fill="#f8f8fa"/><path d="M3.500 3h4M3.500 4.700h4M3.500 6.400h4" stroke="#5a5a66" stroke-width=".8"/></svg><span class="t" style="top:683px;line-height:16px;font-size:12px;color:#1e1e1e;left:560px;letter-spacing:0.164px;">faNormal</span><svg class="i" style="left:541.5px;top:705.5px;" width="10.5" height="9" viewBox="0 0 10.5 9"><rect x=".5" y=".5" width="9.500" height="8" rx="1.200" fill="#e4e6ec" stroke="#8e9098"/><rect x="1.200" y="1.200" width="8" height="3" fill="#f8f8fa"/><path d="M3.500 3h4M3.500 4.700h4M3.500 6.400h4" stroke="#5a5a66" stroke-width=".8"/></svg><span class="t" style="top:702px;line-height:16px;font-size:12px;color:#1e1e1e;left:560px;letter-spacing:0.280px;">faOffline</span><svg class="i" style="left:541.5px;top:724.5px;" width="10.5" height="9" viewBox="0 0 10.5 9"><rect x=".5" y=".5" width="9.500" height="8" rx="1.200" fill="#e4e6ec" stroke="#8e9098"/><rect x="1.200" y="1.200" width="8" height="3" fill="#f8f8fa"/><path d="M3.500 3h4M3.500 4.700h4M3.500 6.400h4" stroke="#5a5a66" stroke-width=".8"/></svg><span class="t" style="top:721px;line-height:16px;font-size:12px;color:#1e1e1e;left:560px;letter-spacing:-0.138px;">faReadOnly</span><svg class="i" style="left:541.5px;top:743.5px;" width="10.5" height="9" viewBox="0 0 10.5 9"><rect x=".5" y=".5" width="9.500" height="8" rx="1.200" fill="#e4e6ec" stroke="#8e9098"/><rect x="1.200" y="1.200" width="8" height="3" fill="#f8f8fa"/><path d="M3.500 3h4M3.500 4.700h4M3.500 6.400h4" stroke="#5a5a66" stroke-width=".8"/></svg><span class="t" style="top:740px;line-height:16px;font-size:12px;color:#1e1e1e;left:560px;letter-spacing:-0.194px;">faReparsePoint</span><svg class="i" style="left:541.5px;top:762.5px;" width="10.5" height="9" viewBox="0 0 10.5 9"><rect x=".5" y=".5" width="9.500" height="8" rx="1.200" fill="#e4e6ec" stroke="#8e9098"/><rect x="1.200" y="1.200" width="8" height="3" fill="#f8f8fa"/><path d="M3.500 3h4M3.500 4.700h4M3.500 6.400h4" stroke="#5a5a66" stroke-width=".8"/></svg><span class="t" style="top:759px;line-height:16px;font-size:12px;color:#1e1e1e;left:560px;letter-spacing:-0.365px;">faSparseFile</span><div style="left:890px;top:585px;width:17px;height:190.5px;background:#eeeeee;"></div><svg class="i" style="left:893.5px;top:592.5px;" width="8" height="5" viewBox="0 0 8 5"><path d="M.5 4.500l3.500-3.500l3.500 3.500" fill="none" stroke="#454545" stroke-width="1.900"/></svg><svg class="i" style="left:893.5px;top:765.5px;" width="8" height="5" viewBox="0 0 8 5"><path d="M.5 .5l3.500 3.500l3.500-3.500" fill="none" stroke="#454545" stroke-width="1.900"/></svg><div style="left:890px;top:676px;width:15px;height:17px;background:#cdcdcd;"></div><div style="left:314px;top:827.5px;width:1312px;height:19px;background:#c0cbdc;border-top:1px solid #9c9ca4;"></div><span class="t" style="top:829.5px;line-height:16px;font-size:12px;color:#1e1e1e;left:318px;letter-spacing:0.161px;">Output</span><svg class="i" style="left:1598px;top:833.0px;" width="6" height="9" viewBox="0 0 6 9"><path d="M1 .5h4M1.500 .5v4.500M4.500 .5v4.500M3.800 .5v4.500M0 5h6M3 5v3.500" stroke="#1e1e1e" stroke-width="1" fill="none"/></svg><svg class="i" style="left:1614.5px;top:833.5px;" width="7" height="7" viewBox="0 0 7 7"><path d="M.5 .5l6 6M6.5 .5l-6 6" stroke="#1e1e1e" stroke-width="1.2"/></svg><svg class="i" style="left:319px;top:852px;" width="16" height="16" viewBox="0 0 16 16"><circle cx="10.5" cy="9.5" r="3" fill="none" stroke="#424242" stroke-width="1.3"/><path d="M8.4 11.6l-3.5 3.5" stroke="#424242" stroke-width="1.9" stroke-linecap="round"/><path d="M0.5 4.5l3 -3v2h3v2h-3v2z" fill="#0f5aa0"/></svg><svg class="i" style="left:341px;top:852px;" width="16" height="16" viewBox="0 0 16 16"><circle cx="10.5" cy="9.5" r="3" fill="none" stroke="#424242" stroke-width="1.3"/><path d="M8.4 11.6l-3.5 3.5" stroke="#424242" stroke-width="1.9" stroke-linecap="round"/><path d="M8 4.5l-3 -3v2h-3v2h3v2z" fill="#0f5aa0"/></svg><div style="left:363px;top:850px;width:1px;height:20px;background:#d2d2d8;"></div><svg class="i" style="left:369px;top:852px;" width="16" height="16" viewBox="0 0 16 16"><path d="M6.5 1.5h4.5l2.5 2.5v6.5h-7z" fill="none" stroke="#424242" stroke-width="1.1"/><path d="M11.0 1.5v2.5h2.5" fill="none" stroke="#424242" stroke-width="0.8800000000000001"/><path d="M2.5 5.5h4.5l2.5 2.5v6.5h-7z" fill="#eeeef2" stroke="#424242" stroke-width="1.1"/><path d="M7.0 5.5v2.5h2.5" fill="none" stroke="#424242" stroke-width="0.8800000000000001"/></svg><svg class="i" style="left:391px;top:853px;" width="14" height="14" viewBox="0 0 16 16"><path d="M2.5 2.5l11 11M13.5 2.5l-11 11" stroke="#b3141c" stroke-width="2.4"/></svg><div style="left:412px;top:850px;width:1px;height:20px;background:#d2d2d8;"></div><svg class="i" style="left:418px;top:852px;" width="16" height="16" viewBox="0 0 16 16"><path d="M1.500 9.500v-8h8M3.500 11.500v-8h8" fill="none" stroke="#6a6a6a"/><rect x="5.5" y="5.5" width="9" height="9" fill="#fff" stroke="#424242" stroke-width="1.200"/><path d="M7.500 10h5M10 7.500v5" stroke="#2b5a9a" stroke-width="1.400"/></svg><svg class="i" style="left:440px;top:852px;" width="16" height="16" viewBox="0 0 16 16"><path d="M1.500 9.500v-8h8M3.500 11.500v-8h8" fill="none" stroke="#6a6a6a"/><rect x="5.5" y="5.5" width="9" height="9" fill="#fff" stroke="#424242" stroke-width="1.200"/><path d="M7.500 10h5" stroke="#2b5a9a" stroke-width="1.400"/></svg><div style="left:314px;top:873px;width:1312px;height:120px;background:#ffffff;border:1px solid #828790;"></div><div style="left:327px;top:875px;width:1px;height:99px;background:repeating-linear-gradient(#585858 0 1px,transparent 1px 2px);"></div><div style="left:342px;top:875px;width:1px;height:63px;background:repeating-linear-gradient(#585858 0 1px,transparent 1px 2px);"></div><div style="left:343px;top:884.5px;width:8px;height:1px;background:repeating-linear-gradient(90deg,#585858 0 1px,transparent 1px 2px);"></div><svg class="i" style="left:354px;top:878.0px;" width="9" height="12" viewBox="0 0 9 12"><path d="M.7 .7v10.600l7.300-5.300z" fill="#fff" stroke="#5a5a5a" stroke-width="1"/></svg><span class="t" style="top:875.5px;line-height:16px;font-size:12px;color:#1e1e1e;left:371px;letter-spacing:-0.121px;">Total Pages   : 0</span><div style="left:343px;top:902.5px;width:8px;height:1px;background:repeating-linear-gradient(90deg,#585858 0 1px,transparent 1px 2px);"></div><svg class="i" style="left:354px;top:896.0px;" width="9" height="12" viewBox="0 0 9 12"><path d="M.7 .7v10.600l7.300-5.300z" fill="#fff" stroke="#5a5a5a" stroke-width="1"/></svg><span class="t" style="top:893.5px;line-height:16px;font-size:12px;color:#1e1e1e;left:371px;letter-spacing:-0.246px;">Static Data   : 334889</span><div style="left:343px;top:920.5px;width:8px;height:1px;background:repeating-linear-gradient(90deg,#585858 0 1px,transparent 1px 2px);"></div><svg class="i" style="left:354px;top:914.0px;" width="9" height="12" viewBox="0 0 9 12"><path d="M.7 .7v10.600l7.300-5.300z" fill="#fff" stroke="#5a5a5a" stroke-width="1"/></svg><span class="t" style="top:911.5px;line-height:16px;font-size:12px;color:#1e1e1e;left:371px;letter-spacing:-0.468px;">Message area   : 210660</span><div style="left:343px;top:938.5px;width:8px;height:1px;background:repeating-linear-gradient(90deg,#585858 0 1px,transparent 1px 2px);"></div><svg class="i" style="left:354px;top:932.0px;" width="9" height="12" viewBox="0 0 9 12"><path d="M.7 .7v10.600l7.300-5.300z" fill="#fff" stroke="#5a5a5a" stroke-width="1"/></svg><span class="t" style="top:929.5px;line-height:16px;font-size:12px;color:#1e1e1e;left:371px;letter-spacing:-0.276px;">Total Blocks   : 13247</span><div style="left:328px;top:956.5px;width:8px;height:1px;background:repeating-linear-gradient(90deg,#585858 0 1px,transparent 1px 2px);"></div><div style="left:328px;top:974.5px;width:8px;height:1px;background:repeating-linear-gradient(90deg,#585858 0 1px,transparent 1px 2px);"></div><svg class="i" style="left:335.5px;top:948.5px;" width="14" height="14" viewBox="0 0 14 14"><circle cx="7" cy="7" r="6.500" fill="#1e1e1e"/><rect x="4.300" y="4.300" width="5.400" height="5.400" rx="1" fill="#fff"/></svg><span class="t" style="top:947.5px;line-height:16px;font-size:12px;color:#1e1e1e;left:356px;letter-spacing:0.263px;">----Compile Finished----</span><svg class="i" style="left:335.5px;top:966.5px;" width="14" height="14" viewBox="0 0 14 14"><circle cx="7" cy="7" r="7" fill="#1e8ad2"/><path d="M7 6v5" stroke="#fff" stroke-width="1.800"/><circle cx="7" cy="3.600" r="1.100" fill="#fff"/></svg><div style="left:354px;top:965px;width:212px;height:18px;background:#ececec;"></div><span class="t" style="top:965.5px;line-height:16px;font-size:12px;color:#1e1e1e;left:356px;letter-spacing:-0.033px;">Starting web application: WebListDemo</span><div style="left:1609px;top:874px;width:16px;height:118px;background:#f0f0f0;"></div><svg class="i" style="left:1612.5px;top:881.5px;" width="8" height="5" viewBox="0 0 8 5"><path d="M.5 4.500l3.500-3.500l3.500 3.500" fill="none" stroke="#454545" stroke-width="1.900"/></svg><svg class="i" style="left:1612.5px;top:981.5px;" width="8" height="5" viewBox="0 0 8 5"><path d="M.5 .5l3.500 3.500l3.500-3.500" fill="none" stroke="#454545" stroke-width="1.900"/></svg><div style="left:1609px;top:957px;width:15px;height:17px;background:#cdcdcd;"></div><div style="left:315px;top:994px;width:69px;height:24px;background:#fbfbfc;"></div><div style="left:385px;top:995px;width:151px;height:21px;background:#ececee;"></div><div style="left:537px;top:995px;width:89px;height:21px;background:#ececee;"></div><div style="left:627px;top:995px;width:89px;height:21px;background:#ececee;"></div><div style="left:717px;top:995px;width:205px;height:21px;background:#ececee;"></div><div style="left:384px;top:995px;width:1px;height:21px;background:#d0d0d6;"></div><div style="left:536px;top:995px;width:1px;height:21px;background:#d0d0d6;"></div><div style="left:626px;top:995px;width:1px;height:21px;background:#d0d0d6;"></div><div style="left:716px;top:995px;width:1px;height:21px;background:#d0d0d6;"></div><div style="left:922px;top:995px;width:1px;height:21px;background:#d0d0d6;"></div><svg class="i" style="left:319px;top:998px;" width="15" height="14" viewBox="0 0 15 14"><path d="M9 4v-2.500h-8v11h8v-2.500" fill="none" stroke="#424242" stroke-width="1.300"/><path d="M4 7h6" stroke="#424242" stroke-width="2"/><path d="M9 3l5 4l-5 4z" fill="#424242"/></svg><span class="t" style="top:997px;line-height:16px;font-size:12px;color:#1e1e1e;left:338px;letter-spacing:0.161px;">Output</span><svg class="i" style="left:388px;top:997px;" width="14" height="16" viewBox="0 0 14 16"><g transform="scale(.9)"><rect x="3" y="4" width="10" height="11" fill="#fff" stroke="#424242" stroke-width="1.3"/><path d="M6 4v-1.5a2 2 0 0 1 4 0v1.5z" fill="#fff" stroke="#424242" stroke-width="1.2"/><path d="M5.5 10l2 2.5l4.5-7" fill="none" stroke="#424242" stroke-width="1.5"/></g></svg><span class="t" style="top:997px;line-height:16px;font-size:12px;color:#1e1e1e;left:407px;letter-spacing:-0.152px;">To Do List [WebApp.src]</span><svg class="i" style="left:541px;top:997px;" width="14" height="16" viewBox="0 0 14 16"><g transform="scale(.85)"><path d="M6 2.5h5.5l3.5 3.5v8.0h-9z" fill="#eef3fa" stroke="#424242" stroke-width="1.3"/><path d="M11.5 2.5v3.5h3.5" fill="none" stroke="#424242" stroke-width="1.04"/><circle cx="6.3" cy="10" r="2.1" fill="none" stroke="#0f5aa0" stroke-width="1.1"/><path d="M4.83 11.47l-2.8 2.8" stroke="#0f5aa0" stroke-width="1.7000000000000002" stroke-linecap="round"/></g></svg><span class="t" style="top:997px;line-height:16px;font-size:12px;color:#1e1e1e;left:560px;letter-spacing:-0.309px;">Find Results</span><svg class="i" style="left:631px;top:997px;" width="15" height="16" viewBox="0 0 15 16"><g transform="scale(.9)"><path d="M3.5 3v-1.5h12v11h-5" fill="none" stroke="#424242" stroke-width="1.2"/><rect x="3" y="1" width="13" height="2.6" fill="#424242"/><circle cx="5" cy="10.5" r="4.6" fill="#d4000f"/></g></svg><span class="t" style="top:997px;line-height:16px;font-size:12px;color:#1e1e1e;left:651px;letter-spacing:-0.125px;">Breakpoints</span><svg class="i" style="left:722px;top:998px;" width="15" height="14" viewBox="0 0 15 14"><g transform="scale(.93)"><rect x="1.0" y="2.0" width="14" height="12" fill="#fff" stroke="#424242"/><rect x="0.5" y="1.5" width="15" height="3" fill="#424242"/><path d="M5.5 6l3.5 6.5h-7z" fill="#ffd91a" stroke="#c9a800" stroke-width=".5"/><path d="M5.5 8v2.5M5.5 11.2v.8" stroke="#333" stroke-width="1"/><path d="M9.5 9l2 2.5l3-5" fill="none" stroke="#424242" stroke-width="1.5"/></g></svg><span class="t" style="top:997px;line-height:16px;font-size:12px;color:#1e1e1e;left:741px;letter-spacing:-0.060px;">Problem Resolution [WebApp.src]</span><div style="left:1631px;top:101px;width:289px;height:19.5px;background:#c0cbdc;border-top:1px solid #9c9ca4;"></div><span class="t" style="top:103.75px;line-height:16px;font-size:12px;color:#1e1e1e;left:1635px;letter-spacing:-0.268px;">Workspace Explorer</span><svg class="i" style="left:1892px;top:106.75px;" width="6" height="9" viewBox="0 0 6 9"><path d="M1 .5h4M1.500 .5v4.500M4.500 .5v4.500M3.800 .5v4.500M0 5h6M3 5v3.500" stroke="#1e1e1e" stroke-width="1" fill="none"/></svg><svg class="i" style="left:1907.5px;top:107.25px;" width="7" height="7" viewBox="0 0 7 7"><path d="M.5 .5l6 6M6.5 .5l-6 6" stroke="#1e1e1e" stroke-width="1.2"/></svg><span class="t" style="top:129.5px;line-height:16px;font-size:12px;color:#1e1e1e;left:1636.5px;letter-spacing:-0.127px;">Current Project:</span><div style="left:1726px;top:127px;width:192px;height:23px;background:linear-gradient(#ebebeb,#dedede);border:1px solid #adadad;"></div><span class="t" style="top:129.5px;line-height:16px;font-size:12px;color:#1e1e1e;left:1730.5px;letter-spacing:-0.214px;">WebApp.src</span><svg class="i" style="left:1904px;top:135px;" width="11" height="6" viewBox="0 0 11 6"><path d="M.5 .5l5 5l5-5" fill="none" stroke="#444" stroke-width="1.200"/></svg><div style="left:1631px;top:154px;width:289px;height:307px;background:#ffffff;border:1px solid #828790;border-right:none;"></div><svg class="i" style="left:1640.0px;top:161.5px;" width="9" height="9" viewBox="0 0 9 9"><rect x=".5" y=".5" width="8" height="8" fill="#fff" stroke="#919191"/><path d="M2 4.5h5" stroke="#3a3a7a"/></svg><div style="left:1649px;top:166px;width:3px;height:1px;background:repeating-linear-gradient(90deg,#585858 0 1px,transparent 1px 2px);"></div><svg class="i" style="left:1652px;top:158px;" width="16" height="15" viewBox="0 0 16 15"><path d="M3 6v-4h11v10h-4" fill="none" stroke="#333" stroke-width="1.100"/><rect x="3" y="1.500" width="11" height="2" fill="#333"/><circle cx="4.5" cy="10.5" r="3.5" fill="#fff" stroke="#333" stroke-width=".9"/><path d="M1.0 10.5h7.0M4.5 7.0v7.0" stroke="#333" stroke-width=".7"/><ellipse cx="4.5" cy="10.5" rx="1.575" ry="3.5" fill="none" stroke="#333" stroke-width=".6"/></svg><span class="t" style="top:157px;line-height:16px;font-size:12px;color:#1e1e1e;left:1673px;letter-spacing:-0.214px;">WebApp.src</span><div style="left:1660px;top:173px;width:1px;height:209px;background:repeating-linear-gradient(#585858 0 1px,transparent 1px 2px);"></div><svg class="i" style="left:1656.0px;top:179.5px;" width="9" height="9" viewBox="0 0 9 9"><rect x=".5" y=".5" width="8" height="8" fill="#fff" stroke="#919191"/><path d="M2 4.5h5" stroke="#3a3a7a"/></svg><div style="left:1665px;top:184px;width:3px;height:1px;background:repeating-linear-gradient(90deg,#585858 0 1px,transparent 1px 2px);"></div><svg class="i" style="left:1667px;top:176px;" width="16" height="15" viewBox="0 0 16 15"><rect x="3.5" y="1.5" width="11" height="9" fill="#fff" stroke="#333"/><rect x="3" y="1" width="12" height="2.5" fill="#333"/><path d="M8 6h5M8 8h3" stroke="#333"/><circle cx="4.5" cy="10.5" r="3.5" fill="#fff" stroke="#333" stroke-width=".9"/><path d="M1.0 10.5h7.0M4.5 7.0v7.0" stroke="#333" stroke-width=".7"/><ellipse cx="4.5" cy="10.5" rx="1.575" ry="3.5" fill="none" stroke="#333" stroke-width=".6"/></svg><span class="t" style="top:175px;line-height:16px;font-size:12px;color:#1e1e1e;left:1688.5px;letter-spacing:-0.353px;">Web Views (8)</span><div style="left:1675px;top:192px;width:1px;height:136px;background:repeating-linear-gradient(#585858 0 1px,transparent 1px 2px);"></div><div style="left:1676px;top:202px;width:6px;height:1px;background:repeating-linear-gradient(90deg,#585858 0 1px,transparent 1px 2px);"></div><svg class="i" style="left:1685px;top:195px;" width="10" height="12" viewBox="0 0 10 12"><path d="M0.5 0.5h6l3 3v8h-9z" fill="#fff" stroke="#333" stroke-width="1"/><path d="M6.5 0.5v3h3" fill="none" stroke="#333" stroke-width="0.8"/><path d="M2.500 5.500h5M2.500 7.500h5M2.500 9.500h5" stroke="#555" stroke-width=".6"/></svg><span class="t" style="top:193px;line-height:16px;font-size:12px;color:#1e1e1e;left:1703px;letter-spacing:0.005px;">ClientSortingDemo.wo</span><div style="left:1676px;top:220px;width:6px;height:1px;background:repeating-linear-gradient(90deg,#585858 0 1px,transparent 1px 2px);"></div><svg class="i" style="left:1685px;top:213px;" width="10" height="12" viewBox="0 0 10 12"><path d="M0.5 0.5h6l3 3v8h-9z" fill="#fff" stroke="#333" stroke-width="1"/><path d="M6.5 0.5v3h3" fill="none" stroke="#333" stroke-width="0.8"/><path d="M2.500 5.500h5M2.500 7.500h5M2.500 9.500h5" stroke="#555" stroke-width=".6"/></svg><div style="left:1701px;top:210px;width:80px;height:18px;background:#ececec;"></div><span class="t" style="top:211px;line-height:16px;font-size:12px;color:#1e1e1e;left:1703px;letter-spacing:-0.158px;">Dashboard.wo</span><div style="left:1676px;top:238px;width:6px;height:1px;background:repeating-linear-gradient(90deg,#585858 0 1px,transparent 1px 2px);"></div><svg class="i" style="left:1685px;top:231px;" width="10" height="12" viewBox="0 0 10 12"><path d="M0.5 0.5h6l3 3v8h-9z" fill="#fff" stroke="#333" stroke-width="1"/><path d="M6.5 0.5v3h3" fill="none" stroke="#333" stroke-width="0.8"/><path d="M2.500 5.500h5M2.500 7.500h5M2.500 9.500h5" stroke="#555" stroke-width=".6"/></svg><span class="t" style="top:229px;line-height:16px;font-size:12px;color:#1e1e1e;left:1703px;letter-spacing:-0.227px;">ExpandPanelDemo.wo</span><div style="left:1676px;top:256px;width:6px;height:1px;background:repeating-linear-gradient(90deg,#585858 0 1px,transparent 1px 2px);"></div><svg class="i" style="left:1685px;top:249px;" width="10" height="12" viewBox="0 0 10 12"><path d="M0.5 0.5h6l3 3v8h-9z" fill="#fff" stroke="#333" stroke-width="1"/><path d="M6.5 0.5v3h3" fill="none" stroke="#333" stroke-width="0.8"/><path d="M2.500 5.500h5M2.500 7.500h5M2.500 9.500h5" stroke="#555" stroke-width=".6"/></svg><span class="t" style="top:247px;line-height:16px;font-size:12px;color:#1e1e1e;left:1703px;letter-spacing:0.039px;">InfiniteScrollingDemo.wo</span><div style="left:1676px;top:274px;width:6px;height:1px;background:repeating-linear-gradient(90deg,#585858 0 1px,transparent 1px 2px);"></div><svg class="i" style="left:1685px;top:267px;" width="10" height="12" viewBox="0 0 10 12"><path d="M0.5 0.5h6l3 3v8h-9z" fill="#fff" stroke="#333" stroke-width="1"/><path d="M6.5 0.5v3h3" fill="none" stroke="#333" stroke-width="0.8"/><path d="M2.500 5.500h5M2.500 7.500h5M2.500 9.500h5" stroke="#555" stroke-width=".6"/></svg><span class="t" style="top:265px;line-height:16px;font-size:12px;color:#1e1e1e;left:1703px;letter-spacing:0.057px;">Login.wo</span><div style="left:1676px;top:292px;width:6px;height:1px;background:repeating-linear-gradient(90deg,#585858 0 1px,transparent 1px 2px);"></div><svg class="i" style="left:1685px;top:285px;" width="10" height="12" viewBox="0 0 10 12"><path d="M0.5 0.5h6l3 3v8h-9z" fill="#fff" stroke="#333" stroke-width="1"/><path d="M6.5 0.5v3h3" fill="none" stroke="#333" stroke-width="0.8"/><path d="M2.500 5.500h5M2.500 7.500h5M2.500 9.500h5" stroke="#555" stroke-width=".6"/></svg><span class="t" style="top:283px;line-height:16px;font-size:12px;color:#1e1e1e;left:1703px;letter-spacing:-0.055px;">ManualLoadedListDemo.wo</span><div style="left:1676px;top:310px;width:6px;height:1px;background:repeating-linear-gradient(90deg,#585858 0 1px,transparent 1px 2px);"></div><svg class="i" style="left:1685px;top:303px;" width="10" height="12" viewBox="0 0 10 12"><path d="M0.5 0.5h6l3 3v8h-9z" fill="#fff" stroke="#333" stroke-width="1"/><path d="M6.5 0.5v3h3" fill="none" stroke="#333" stroke-width="0.8"/><path d="M2.500 5.500h5M2.500 7.500h5M2.500 9.500h5" stroke="#555" stroke-width=".6"/></svg><span class="t" style="top:301px;line-height:16px;font-size:12px;color:#1e1e1e;left:1703px;letter-spacing:-0.076px;">RowLayoutDemo.wo</span><div style="left:1676px;top:328px;width:6px;height:1px;background:repeating-linear-gradient(90deg,#585858 0 1px,transparent 1px 2px);"></div><svg class="i" style="left:1685px;top:321px;" width="10" height="12" viewBox="0 0 10 12"><path d="M0.5 0.5h6l3 3v8h-9z" fill="#fff" stroke="#333" stroke-width="1"/><path d="M6.5 0.5v3h3" fill="none" stroke="#333" stroke-width="0.8"/><path d="M2.500 5.500h5M2.500 7.500h5M2.500 9.500h5" stroke="#555" stroke-width=".6"/></svg><span class="t" style="top:319px;line-height:16px;font-size:12px;color:#1e1e1e;left:1703px;letter-spacing:-0.013px;">ScrollingDemo.wo</span><svg class="i" style="left:1656.0px;top:341.5px;" width="9" height="9" viewBox="0 0 9 9"><rect x=".5" y=".5" width="8" height="8" fill="#fff" stroke="#919191"/><path d="M2 4.5h5" stroke="#3a3a7a"/><path d="M4.5 2v5" stroke="#3a3a7a"/></svg><div style="left:1665px;top:346px;width:3px;height:1px;background:repeating-linear-gradient(90deg,#585858 0 1px,transparent 1px 2px);"></div><svg class="i" style="left:1667px;top:337px;" width="16" height="15" viewBox="0 0 16 15"><circle cx="5" cy="10" r="4" fill="#fff" stroke="#333" stroke-width=".9"/><path d="M1 10h8M5 6v8" stroke="#333" stroke-width=".7"/><ellipse cx="5" cy="10" rx="1.8" ry="4" fill="none" stroke="#333" stroke-width=".6"/><circle cx="11.5" cy="4" r="2.6" fill="#fff" stroke="#333"/><path d="M10 4h3M11.500 2.500v3" stroke="#333" stroke-width=".7"/></svg><span class="t" style="top:337px;line-height:16px;font-size:12px;color:#1e1e1e;left:1688.5px;letter-spacing:-0.102px;">Web Components (2)</span><svg class="i" style="left:1656.0px;top:359.5px;" width="9" height="9" viewBox="0 0 9 9"><rect x=".5" y=".5" width="8" height="8" fill="#fff" stroke="#919191"/><path d="M2 4.5h5" stroke="#3a3a7a"/><path d="M4.5 2v5" stroke="#3a3a7a"/></svg><div style="left:1665px;top:364px;width:3px;height:1px;background:repeating-linear-gradient(90deg,#585858 0 1px,transparent 1px 2px);"></div><svg class="i" style="left:1668px;top:357px;" width="15" height="12" viewBox="0 0 15 12"><path d="M.5 1h6.500v10h-6.500zM7 1h6.500v10h-6.500z" fill="#fff" stroke="#333"/></svg><span class="t" style="top:355px;line-height:16px;font-size:12px;color:#1e1e1e;left:1688.5px;letter-spacing:-0.208px;">Data Dictionaries (3)</span><svg class="i" style="left:1656.0px;top:377.5px;" width="9" height="9" viewBox="0 0 9 9"><rect x=".5" y=".5" width="8" height="8" fill="#fff" stroke="#919191"/><path d="M2 4.5h5" stroke="#3a3a7a"/><path d="M4.5 2v5" stroke="#3a3a7a"/></svg><div style="left:1665px;top:382px;width:3px;height:1px;background:repeating-linear-gradient(90deg,#585858 0 1px,transparent 1px 2px);"></div><svg class="i" style="left:1668px;top:374px;" width="14" height="14" viewBox="0 0 14 14"><path d="M5.5 0.5h5l2 2v6h-7z" fill="#fff" stroke="#333" stroke-width="0.9"/><path d="M10.5 0.5v2h2" fill="none" stroke="#333" stroke-width="0.7200000000000001"/><path d="M3 2.5h5l2 2v6h-7z" fill="#fff" stroke="#333" stroke-width="0.9"/><path d="M8 2.5v2h2" fill="none" stroke="#333" stroke-width="0.7200000000000001"/><path d="M0.5 4.5h5l2 2v6.5h-7z" fill="#fff" stroke="#333" stroke-width="0.9"/><path d="M5.5 4.5v2h2" fill="none" stroke="#333" stroke-width="0.7200000000000001"/><path d="M2 8h4M2 10h4" stroke="#333" stroke-width=".7"/></svg><span class="t" style="top:373px;line-height:16px;font-size:12px;color:#1e1e1e;left:1688.5px;letter-spacing:-0.279px;">Other Files (11)</span><div style="left:1631px;top:467px;width:289px;height:19px;background:#c0cbdc;border-top:1px solid #9c9ca4;"></div><span class="t" style="top:469px;line-height:16px;font-size:12px;color:#1e1e1e;left:1635px;letter-spacing:-0.137px;">Properties (Inactive)</span><svg class="i" style="left:1892px;top:472.5px;" width="6" height="9" viewBox="0 0 6 9"><path d="M1 .5h4M1.500 .5v4.500M4.500 .5v4.500M3.800 .5v4.500M0 5h6M3 5v3.500" stroke="#1e1e1e" stroke-width="1" fill="none"/></svg><svg class="i" style="left:1907.5px;top:473.0px;" width="7" height="7" viewBox="0 0 7 7"><path d="M.5 .5l6 6M6.5 .5l-6 6" stroke="#1e1e1e" stroke-width="1.2"/></svg><div style="left:1674px;top:493px;width:239px;height:24px;background:#f2f2f4;border:1px solid #dcdce0;"></div><div style="left:1674px;top:525px;width:239px;height:24px;background:#f2f2f4;border:1px solid #dcdce0;"></div><div style="left:1632px;top:564px;width:284px;height:428px;background:#f0f0f0;border:1px solid #e4e4e8;"></div><span class="t" style="top:572.5px;line-height:16px;font-size:12px;color:#1e1e1e;left:1726px;font-weight:bold;letter-spacing:0.032px;">Nothing to Model</span><span class="t" style="top:602.5px;line-height:16px;font-size:12px;color:#1e1e1e;left:1641px;letter-spacing:-0.110px;">No object, class or table is currently selected.</span><span class="t" style="top:632.5px;line-height:16px;font-size:12px;color:#1e1e1e;left:1641px;letter-spacing:0.263px;">Hint:</span><span class="t" style="top:656px;line-height:16px;font-size:12px;color:#1e1e1e;left:1641px;">•</span><span class="t" style="top:656px;line-height:16px;font-size:12px;color:#1e1e1e;left:1650px;letter-spacing:-0.205px;">Select an object or a class via <a>Code Explorer</a> or</span><span class="t" style="top:670.5px;line-height:16px;font-size:12px;color:#1e1e1e;left:1650px;letter-spacing:-0.114px;">the Visual Designer to view its properties.</span><span class="t" style="top:694px;line-height:16px;font-size:12px;color:#1e1e1e;left:1641px;">•</span><span class="t" style="top:694px;line-height:16px;font-size:12px;color:#1e1e1e;left:1650px;letter-spacing:-0.062px;">In the Code Editor position the cursor inside an</span><span class="t" style="top:709px;line-height:16px;font-size:12px;color:#1e1e1e;left:1650px;letter-spacing:-0.148px;">object or a class declaration and press Ctrl+F7.</span><span class="t" style="top:732px;line-height:16px;font-size:12px;color:#1e1e1e;left:1641px;">•</span><span class="t" style="top:732px;line-height:16px;font-size:12px;color:#1e1e1e;left:1650px;letter-spacing:-0.185px;">Select a Table via <a>Table Explorer</a> or the Table</span><span class="t" style="top:746.5px;line-height:16px;font-size:12px;color:#1e1e1e;left:1650px;letter-spacing:-0.015px;">Editor to view its attribute properties.</span><div style="left:1632px;top:993px;width:135px;height:25px;background:#fbfbfc;"></div><div style="left:1768px;top:995px;width:143px;height:21px;background:#ececee;"></div><div style="left:1767px;top:995px;width:1px;height:21px;background:#d0d0d6;"></div><div style="left:1911px;top:995px;width:1px;height:21px;background:#d0d0d6;"></div><svg class="i" style="left:1636px;top:997px;" width="15" height="16" viewBox="0 0 15 16"><g transform="scale(.93)"><rect x="5" y="1.5" width="10" height="13" fill="#fff" stroke="#424242" stroke-width="1.2"/><path d="M6.5 4h3M10.5 4h3.5M6.5 6.5h3M10.5 6.5h3.5M6.5 9h3M10.5 9h3.5M6.5 11.5h3M10.5 11.5h3.5" stroke="#424242" stroke-width="1.1"/><path d="M1.5 6v3.5a1.8 1.8 0 0 0 3.6 0v-3.5M3.3 11v4" fill="none" stroke="#424242" stroke-width="1.6"/></g></svg><span class="t" style="top:997.5px;line-height:16px;font-size:12px;color:#1e1e1e;left:1655.5px;letter-spacing:-0.161px;">Properties (Inactive)</span><svg class="i" style="left:1771px;top:997px;" width="15" height="16" viewBox="0 0 15 16"><g transform="scale(.93)"><path d="M8 2.7v6a3.5 1.8 0 0 0 7 0v-6z" fill="#424242"/><ellipse cx="11.5" cy="3.0" rx="3.5" ry="1.8" fill="#dcdcdc" stroke="#424242" stroke-width="0.8"/><path d="M5.300 7h3M5.300 7v3.500M2 13v-2.500h6.700v2.500" fill="none" stroke="#424242" stroke-width="1.100"/><rect x="4" y="5.600" width="2.600" height="2.600" fill="#424242"/><rect x=".5" y="12" width="3" height="3" fill="#424242"/><rect x="7.5" y="12" width="3" height="3" fill="#424242"/></g></svg><span class="t" style="top:997.5px;line-height:16px;font-size:12px;color:#1e1e1e;left:1790.5px;letter-spacing:-0.127px;">DDO Explorer [Infinit...</span><div style="left:0px;top:1017px;width:1920px;height:1px;background:#dcf2fc;"></div><div style="left:0px;top:1018px;width:1920px;height:22px;background:#0d7ccd;"></div><span class="t" style="top:1021.5px;line-height:16px;font-size:12px;color:#fff;left:3.5px;letter-spacing:0.084px;">C:\projects\WebListDemo\AppSrc\InfiniteScrollingDemo.wo</span><span class="t" style="top:1021.5px;line-height:16px;font-size:12px;color:#fff;left:1537px;letter-spacing:-0.406px;">Ln 42</span><span class="t" style="top:1021.5px;line-height:16px;font-size:12px;color:#fff;left:1577px;letter-spacing:-0.198px;">Col 30</span><svg class="i" style="left:1691px;top:1022px;" width="16" height="16" viewBox="0 0 16 16"><circle cx="8" cy="8" r="7.200" fill="#fff" stroke="#c4161c" stroke-width="1.300"/><path d="M8 3.500v6" stroke="#c4161c" stroke-width="2"/><circle cx="8" cy="12" r="1.200" fill="#c4161c"/></svg><svg class="i" style="left:1759px;top:1022px;" width="16" height="16" viewBox="0 0 16 16"><circle cx="8" cy="8" r="6.300" fill="#a8a8a8" stroke="#fff" stroke-width="2.200"/><path d="M3.500 3.500l9 9" stroke="#fff" stroke-width="2.200"/></svg><span class="t" style="top:1021.5px;line-height:16px;font-size:12px;color:#fff;left:1793px;letter-spacing:-0.505px;">INS</span><span class="t" style="top:1021.5px;line-height:16px;font-size:12px;color:#6fb7ee;left:1837.5px;letter-spacing:-0.922px;">CAPS</span><span class="t" style="top:1021.5px;line-height:16px;font-size:12px;color:#fff;left:1881.5px;letter-spacing:0.057px;">NUM</span><div style="left:0px;top:1040px;width:1920px;height:40px;background:#1d428d;"></div><div style="left:196px;top:1040px;width:48px;height:40px;background:#2c55a6;"></div><div style="left:151px;top:1078px;width:40px;height:2px;background:#8ea6d6;"></div><div style="left:196px;top:1078px;width:48px;height:2px;background:#a9bde3;"></div><svg class="i" style="left:15.500px;top:1051.500px" width="17" height="16.500" viewBox="0 0 18 18" preserveAspectRatio="none"><path d="M0 2.500l7.500-1v7h-7.500zM8.500 1.300l9.500-1.300v8.500h-9.500zM0 9.500h7.500v7l-7.500-1zM8.500 9.500h9.500v8.500l-9.500-1.300z" fill="#fff"/></svg><svg class="i" style="left:63px;top:1050px;" width="20" height="20" viewBox="0 0 20 20"><circle cx="11.500" cy="8" r="5.500" fill="none" stroke="#fff" stroke-width="1.400"/><path d="M7.500 12l-6 6.500" stroke="#fff" stroke-width="1.600"/></svg><svg class="i" style="left:111px;top:1052px;" width="18" height="16" viewBox="0 0 18 16"><rect x="1" y="3.500" width="11" height="9" fill="none" stroke="#fff" stroke-width="1.300"/><path d="M0 .7h13M0 15.300h13M15.500 0v3M15.500 5v11" stroke="#fff" stroke-width="1.300"/></svg><svg class="i" style="left:160px;top:1049px;" width="22" height="22" viewBox="0 0 22 22"><circle cx="11" cy="11" r="11" fill="#db4437"/><path d="M11 11L1.500 5.500A11 11 0 0 0 7 21.200z" fill="#0f9d58"/><path d="M11 11L7 21.200A11 11 0 0 0 21.500 7.500H11z" fill="#ffcd40"/><path d="M11 11L1.500 5.500A11 11 0 0 1 21.500 7.500z" fill="#db4437"/><circle cx="11" cy="11" r="5" fill="#f1f1f1"/><circle cx="11" cy="11" r="4" fill="#4285f4"/></svg><svg class="i" style="left:208px;top:1048px;" width="24" height="24" viewBox="0 0 24 24"><rect width="24" height="24" fill="#d9431a"/><text x="12" y="18" text-anchor="middle" font-family="Liberation Sans" font-weight="bold" font-size="15" fill="#fff" letter-spacing="-1">DF</text></svg></body></html>
